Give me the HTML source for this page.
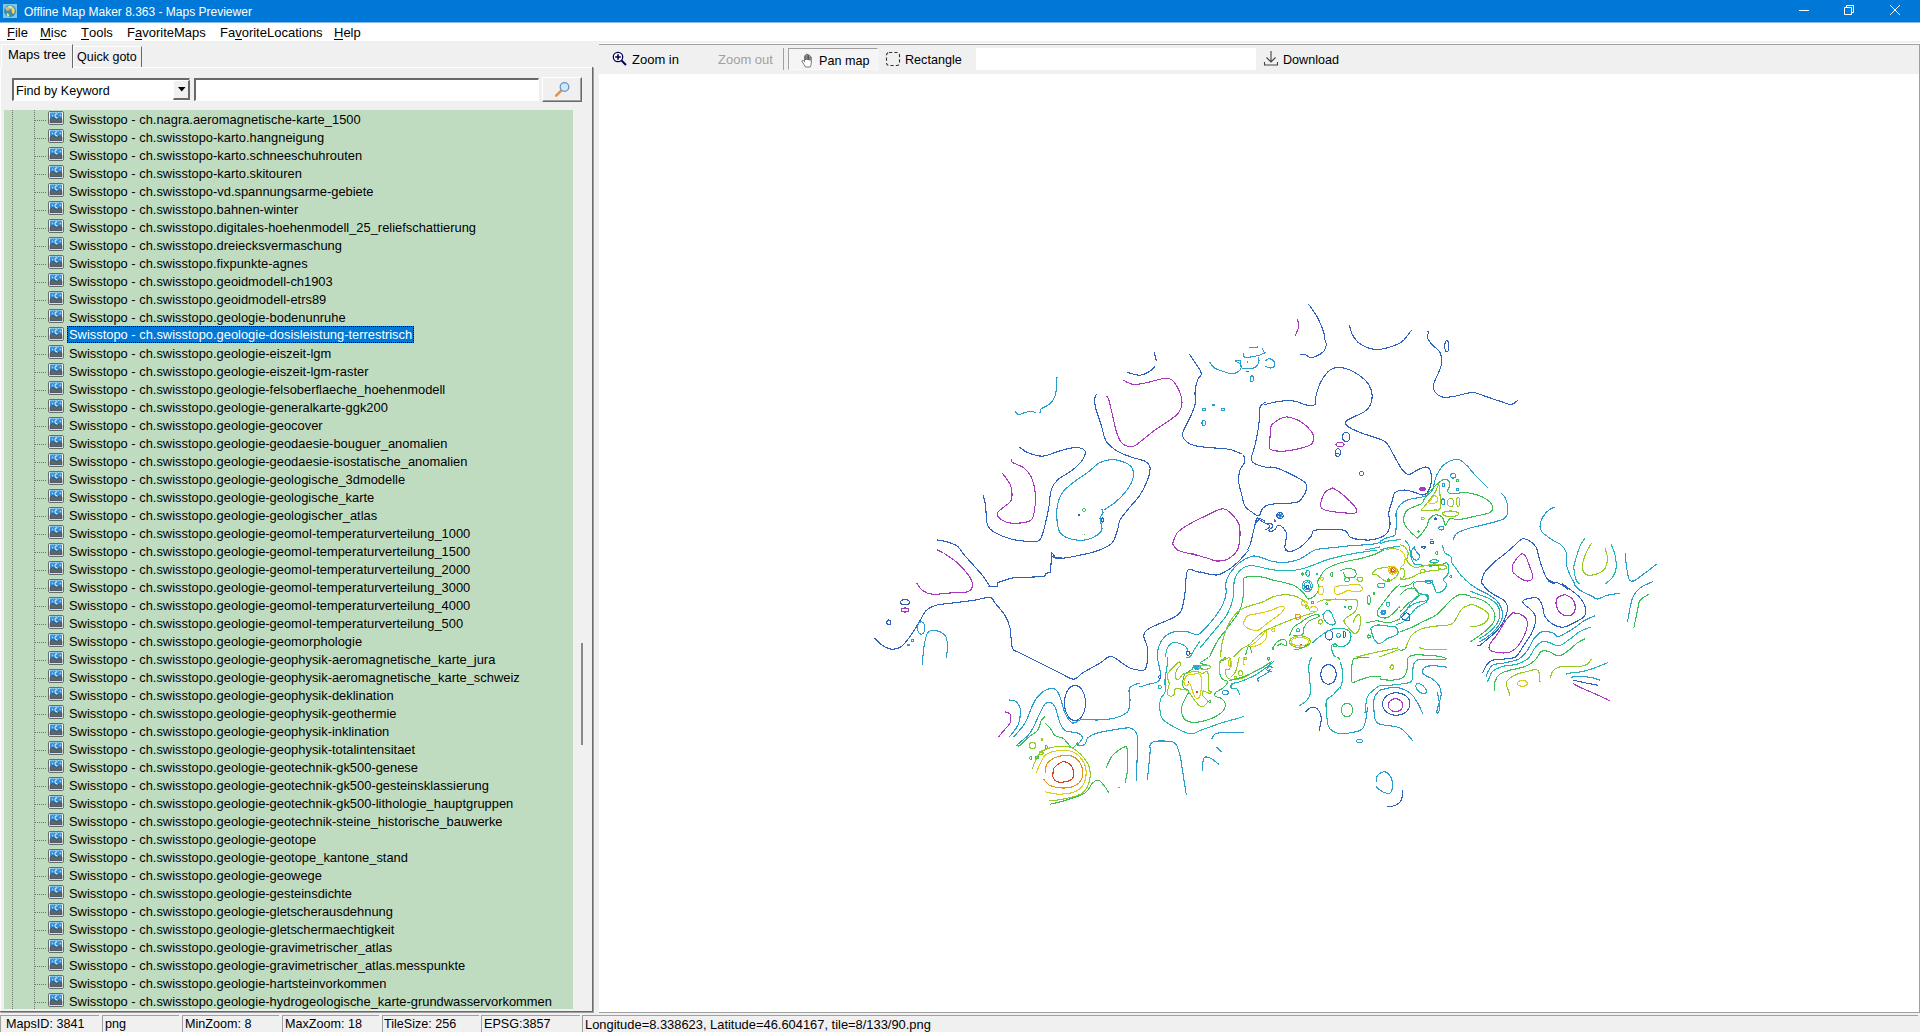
<!DOCTYPE html>
<html><head><meta charset="utf-8">
<style>
*{margin:0;padding:0;box-sizing:border-box}
html,body{width:1920px;height:1032px;overflow:hidden;background:#f0f0f0;font-family:"Liberation Sans",sans-serif;color:#000}
.a{position:absolute}
#title{left:0;top:0;width:1920px;height:22px;background:#0078d7}
#title .t{left:24px;top:4px;font-size:12px;color:#fff;line-height:16px;white-space:nowrap}
#menu{left:0;top:22px;width:1920px;height:19px;background:#fff}
#menu span{position:absolute;top:3px;font-size:13px;line-height:16px;white-space:nowrap}
#menu u{text-decoration:none;border-bottom:1px solid #000;display:inline-block;line-height:12px}
.tab{font-size:13px;line-height:16px;white-space:nowrap}
#tree{left:4px;top:110px;width:569px;height:899px;background:#c0dcc0;overflow:hidden}
.row{position:absolute;left:-4px;width:573px;height:18px}
.row .hl{position:absolute;left:35px;top:10px;width:12px;height:1px;background:repeating-linear-gradient(90deg,#6a7a6a 0 1px,transparent 1px 2px)}
.row .ic{position:absolute;left:48px;top:1px;width:16px;height:14px}
.row span{position:absolute;left:69px;top:2px;font-size:12.9px;line-height:16px;white-space:nowrap;padding:0}
.row.sel span{left:67px;top:0px;height:17px;line-height:17px;padding:0 2px;background:#0078d7;color:#fff;outline:1px dotted #000;outline-offset:-1px}
.vd{width:1px;background:repeating-linear-gradient(180deg,#6a7a6a 0 1px,transparent 1px 2px)}
.btxt{font-size:13px;line-height:16px;white-space:nowrap}
.sp{position:absolute;top:1015px;height:17px;border-top:1px solid #a0a0a0;border-left:1px solid #a0a0a0;font-size:12.6px;line-height:15px;white-space:nowrap;padding-left:5px;padding-top:1px}
</style></head><body>
<svg width="0" height="0" style="position:absolute"><defs><symbol id="ico" viewBox="0 0 16 14">
<rect x="0.5" y="0.5" width="15" height="13" rx="1.5" fill="#fff" stroke="#6a6a6a"/>
<rect x="2" y="1.2" width="12" height="10.6" fill="#3a8ad0"/>
<path d="M2 1.7h12" stroke="#c0ecff" stroke-width="0.9" stroke-dasharray="1.6 1"/>
<path d="M4.5 3.3L5.4 4.5L4.5 5.7L3.6 4.5Z" fill="#9ad8ff"/>
<path d="M9.4 2.9a1.9 1.9 0 1 0 0 3.7" stroke="#b8ecff" stroke-width="1.1" fill="none"/>
<circle cx="12.4" cy="4.4" r="0.9" fill="#9ad8ff"/>
<path d="M2 11.8V8.4Q4.4 5.2 6.6 7.3L9 9.3Q11.3 5.2 14 8.2V11.8Z" fill="#646464" stroke="#2c4252" stroke-width="0.6"/>
</symbol></defs></svg>
<div id="title" class="a">
  <svg class="a" style="left:3px;top:4px" width="14" height="14" viewBox="0 0 14 14">
    <rect x="0" y="0" width="14" height="14" fill="#7cc8ee"/>
    <circle cx="7" cy="7" r="6" fill="#3a8fb0"/>
    <path d="M2 4 Q4 1.5 6 3 L7 6 L4 7 Z" fill="#e8b060"/>
    <path d="M8 2 Q11 3 12 6 L11 10 L9 9 L8.5 6 Z" fill="#f0d070"/>
    <path d="M4 9 Q6 9 6.5 11.5 L5 13 L3.5 11 Z" fill="#e0e090"/>
    <path d="M5 2 Q7 1 9 2 L8 5 L6 4 Z" fill="#d8e8c0"/>
  </svg>
  <div class="a t">Offline Map Maker 8.363 - Maps Previewer</div>
  <div class="a" style="left:1799px;top:10px;width:10px;height:1px;background:#fff"></div>
  <svg class="a" style="left:1843px;top:4px" width="12" height="12" viewBox="0 0 12 12"><path d="M1.5 3.5h7v7h-7z M3.5 3.5v-2h7v7h-2" fill="none" stroke="#fff" stroke-width="1"/></svg>
  <svg class="a" style="left:1889px;top:4px" width="12" height="12" viewBox="0 0 12 12"><path d="M1 1L11 11M11 1L1 11" stroke="#fff" stroke-width="1"/></svg>
</div>
<div class="a" style="left:0;top:22px;width:1920px;height:1px;background:#80bceb;z-index:2"></div>
<div id="menu" class="a">
  <span style="left:7px"><u>F</u>ile</span>
  <span style="left:40px"><u>M</u>isc</span>
  <span style="left:81px"><u>T</u>ools</span>
  <span style="left:127px">F<u>a</u>voriteMaps</span>
  <span style="left:220px">Fa<u>v</u>oriteLocations</span>
  <span style="left:334px"><u>H</u>elp</span>
</div>

<!-- left panel -->
<div class="a" style="left:0;top:67px;width:594px;height:946px;border-top:1px solid #fff;border-left:1px solid #fff;border-right:1px solid #a0a0a0;border-bottom:1px solid #a0a0a0"></div>
<div class="a" style="left:592px;top:67px;width:1px;height:945px;background:#696969"></div>
<div class="a" style="left:0px;top:1011px;width:593px;height:1px;background:#696969"></div>
<!-- tabs -->
<div class="a" style="left:73px;top:46px;width:69px;height:21px;border-top:1px solid #fff;border-left:1px solid #fff;border-right:1px solid #696969;background:#f0f0f0"></div>
<div class="a" style="left:1px;top:44px;width:72px;height:24px;border-top:1px solid #fff;border-left:1px solid #fff;border-right:1px solid #696969;background:#f0f0f0"></div>
<div class="a tab" style="left:8px;top:47px">Maps tree</div>
<div class="a tab" style="left:77px;top:49px;font-size:12.5px">Quick goto</div>
<!-- combobox -->
<div class="a" style="left:12px;top:78px;width:178px;height:23px;border-top:2px solid #696969;border-left:2px solid #696969;border-bottom:1px solid #fff;border-right:1px solid #fff;background:#fff"></div>
<div class="a btxt" style="left:16px;top:83px;font-size:12.6px">Find by Keyword</div>
<div class="a" style="left:173px;top:80px;width:17px;height:20px;background:#f0f0f0;border-top:1px solid #fff;border-left:1px solid #fff;border-right:2px solid #696969;border-bottom:2px solid #696969"></div>
<svg class="a" style="left:178px;top:87px" width="8" height="5" viewBox="0 0 8 5"><path d="M0 0h7.5L3.75 4.5z" fill="#000"/></svg>
<!-- text input -->
<div class="a" style="left:194px;top:78px;width:345px;height:23px;border-top:2px solid #696969;border-left:2px solid #696969;border-bottom:1px solid #fff;border-right:1px solid #fff;background:#fff"></div>
<!-- search button -->
<div class="a" style="left:542px;top:77px;width:40px;height:25px;background:#f0f0f0;border-top:1px solid #fff;border-left:1px solid #fff;border-right:1px solid #696969;border-bottom:1px solid #696969;box-shadow:inset -1px -1px 0 #a0a0a0"></div>
<svg class="a" style="left:553px;top:80px" width="20" height="18" viewBox="0 0 20 18">
  <line x1="3.2" y1="15.6" x2="8" y2="10.8" stroke="#dc9550" stroke-width="2.6" stroke-linecap="round"/>
  <circle cx="11.5" cy="7" r="4.3" fill="#cfe8fb" stroke="#6b92c2" stroke-width="1.3"/>
</svg>
<!-- tree -->
<div id="tree" class="a">
  <div class="a vd" style="left:8px;top:0;height:899px"></div>
  <div class="a vd" style="left:30px;top:0;height:899px"></div>
<div class="row" style="top:0px"><i class="hl"></i><svg class="ic" viewBox="0 0 16 14"><use href="#ico"/></svg><span>Swisstopo - ch.nagra.aeromagnetische-karte_1500</span></div>
<div class="row" style="top:18px"><i class="hl"></i><svg class="ic" viewBox="0 0 16 14"><use href="#ico"/></svg><span>Swisstopo - ch.swisstopo-karto.hangneigung</span></div>
<div class="row" style="top:36px"><i class="hl"></i><svg class="ic" viewBox="0 0 16 14"><use href="#ico"/></svg><span>Swisstopo - ch.swisstopo-karto.schneeschuhrouten</span></div>
<div class="row" style="top:54px"><i class="hl"></i><svg class="ic" viewBox="0 0 16 14"><use href="#ico"/></svg><span>Swisstopo - ch.swisstopo-karto.skitouren</span></div>
<div class="row" style="top:72px"><i class="hl"></i><svg class="ic" viewBox="0 0 16 14"><use href="#ico"/></svg><span>Swisstopo - ch.swisstopo-vd.spannungsarme-gebiete</span></div>
<div class="row" style="top:90px"><i class="hl"></i><svg class="ic" viewBox="0 0 16 14"><use href="#ico"/></svg><span>Swisstopo - ch.swisstopo.bahnen-winter</span></div>
<div class="row" style="top:108px"><i class="hl"></i><svg class="ic" viewBox="0 0 16 14"><use href="#ico"/></svg><span>Swisstopo - ch.swisstopo.digitales-hoehenmodell_25_reliefschattierung</span></div>
<div class="row" style="top:126px"><i class="hl"></i><svg class="ic" viewBox="0 0 16 14"><use href="#ico"/></svg><span>Swisstopo - ch.swisstopo.dreiecksvermaschung</span></div>
<div class="row" style="top:144px"><i class="hl"></i><svg class="ic" viewBox="0 0 16 14"><use href="#ico"/></svg><span>Swisstopo - ch.swisstopo.fixpunkte-agnes</span></div>
<div class="row" style="top:162px"><i class="hl"></i><svg class="ic" viewBox="0 0 16 14"><use href="#ico"/></svg><span>Swisstopo - ch.swisstopo.geoidmodell-ch1903</span></div>
<div class="row" style="top:180px"><i class="hl"></i><svg class="ic" viewBox="0 0 16 14"><use href="#ico"/></svg><span>Swisstopo - ch.swisstopo.geoidmodell-etrs89</span></div>
<div class="row" style="top:198px"><i class="hl"></i><svg class="ic" viewBox="0 0 16 14"><use href="#ico"/></svg><span>Swisstopo - ch.swisstopo.geologie-bodenunruhe</span></div>
<div class="row sel" style="top:216px"><i class="hl"></i><svg class="ic" viewBox="0 0 16 14"><use href="#ico"/></svg><span>Swisstopo - ch.swisstopo.geologie-dosisleistung-terrestrisch</span></div>
<div class="row" style="top:234px"><i class="hl"></i><svg class="ic" viewBox="0 0 16 14"><use href="#ico"/></svg><span>Swisstopo - ch.swisstopo.geologie-eiszeit-lgm</span></div>
<div class="row" style="top:252px"><i class="hl"></i><svg class="ic" viewBox="0 0 16 14"><use href="#ico"/></svg><span>Swisstopo - ch.swisstopo.geologie-eiszeit-lgm-raster</span></div>
<div class="row" style="top:270px"><i class="hl"></i><svg class="ic" viewBox="0 0 16 14"><use href="#ico"/></svg><span>Swisstopo - ch.swisstopo.geologie-felsoberflaeche_hoehenmodell</span></div>
<div class="row" style="top:288px"><i class="hl"></i><svg class="ic" viewBox="0 0 16 14"><use href="#ico"/></svg><span>Swisstopo - ch.swisstopo.geologie-generalkarte-ggk200</span></div>
<div class="row" style="top:306px"><i class="hl"></i><svg class="ic" viewBox="0 0 16 14"><use href="#ico"/></svg><span>Swisstopo - ch.swisstopo.geologie-geocover</span></div>
<div class="row" style="top:324px"><i class="hl"></i><svg class="ic" viewBox="0 0 16 14"><use href="#ico"/></svg><span>Swisstopo - ch.swisstopo.geologie-geodaesie-bouguer_anomalien</span></div>
<div class="row" style="top:342px"><i class="hl"></i><svg class="ic" viewBox="0 0 16 14"><use href="#ico"/></svg><span>Swisstopo - ch.swisstopo.geologie-geodaesie-isostatische_anomalien</span></div>
<div class="row" style="top:360px"><i class="hl"></i><svg class="ic" viewBox="0 0 16 14"><use href="#ico"/></svg><span>Swisstopo - ch.swisstopo.geologie-geologische_3dmodelle</span></div>
<div class="row" style="top:378px"><i class="hl"></i><svg class="ic" viewBox="0 0 16 14"><use href="#ico"/></svg><span>Swisstopo - ch.swisstopo.geologie-geologische_karte</span></div>
<div class="row" style="top:396px"><i class="hl"></i><svg class="ic" viewBox="0 0 16 14"><use href="#ico"/></svg><span>Swisstopo - ch.swisstopo.geologie-geologischer_atlas</span></div>
<div class="row" style="top:414px"><i class="hl"></i><svg class="ic" viewBox="0 0 16 14"><use href="#ico"/></svg><span>Swisstopo - ch.swisstopo.geologie-geomol-temperaturverteilung_1000</span></div>
<div class="row" style="top:432px"><i class="hl"></i><svg class="ic" viewBox="0 0 16 14"><use href="#ico"/></svg><span>Swisstopo - ch.swisstopo.geologie-geomol-temperaturverteilung_1500</span></div>
<div class="row" style="top:450px"><i class="hl"></i><svg class="ic" viewBox="0 0 16 14"><use href="#ico"/></svg><span>Swisstopo - ch.swisstopo.geologie-geomol-temperaturverteilung_2000</span></div>
<div class="row" style="top:468px"><i class="hl"></i><svg class="ic" viewBox="0 0 16 14"><use href="#ico"/></svg><span>Swisstopo - ch.swisstopo.geologie-geomol-temperaturverteilung_3000</span></div>
<div class="row" style="top:486px"><i class="hl"></i><svg class="ic" viewBox="0 0 16 14"><use href="#ico"/></svg><span>Swisstopo - ch.swisstopo.geologie-geomol-temperaturverteilung_4000</span></div>
<div class="row" style="top:504px"><i class="hl"></i><svg class="ic" viewBox="0 0 16 14"><use href="#ico"/></svg><span>Swisstopo - ch.swisstopo.geologie-geomol-temperaturverteilung_500</span></div>
<div class="row" style="top:522px"><i class="hl"></i><svg class="ic" viewBox="0 0 16 14"><use href="#ico"/></svg><span>Swisstopo - ch.swisstopo.geologie-geomorphologie</span></div>
<div class="row" style="top:540px"><i class="hl"></i><svg class="ic" viewBox="0 0 16 14"><use href="#ico"/></svg><span>Swisstopo - ch.swisstopo.geologie-geophysik-aeromagnetische_karte_jura</span></div>
<div class="row" style="top:558px"><i class="hl"></i><svg class="ic" viewBox="0 0 16 14"><use href="#ico"/></svg><span>Swisstopo - ch.swisstopo.geologie-geophysik-aeromagnetische_karte_schweiz</span></div>
<div class="row" style="top:576px"><i class="hl"></i><svg class="ic" viewBox="0 0 16 14"><use href="#ico"/></svg><span>Swisstopo - ch.swisstopo.geologie-geophysik-deklination</span></div>
<div class="row" style="top:594px"><i class="hl"></i><svg class="ic" viewBox="0 0 16 14"><use href="#ico"/></svg><span>Swisstopo - ch.swisstopo.geologie-geophysik-geothermie</span></div>
<div class="row" style="top:612px"><i class="hl"></i><svg class="ic" viewBox="0 0 16 14"><use href="#ico"/></svg><span>Swisstopo - ch.swisstopo.geologie-geophysik-inklination</span></div>
<div class="row" style="top:630px"><i class="hl"></i><svg class="ic" viewBox="0 0 16 14"><use href="#ico"/></svg><span>Swisstopo - ch.swisstopo.geologie-geophysik-totalintensitaet</span></div>
<div class="row" style="top:648px"><i class="hl"></i><svg class="ic" viewBox="0 0 16 14"><use href="#ico"/></svg><span>Swisstopo - ch.swisstopo.geologie-geotechnik-gk500-genese</span></div>
<div class="row" style="top:666px"><i class="hl"></i><svg class="ic" viewBox="0 0 16 14"><use href="#ico"/></svg><span>Swisstopo - ch.swisstopo.geologie-geotechnik-gk500-gesteinsklassierung</span></div>
<div class="row" style="top:684px"><i class="hl"></i><svg class="ic" viewBox="0 0 16 14"><use href="#ico"/></svg><span>Swisstopo - ch.swisstopo.geologie-geotechnik-gk500-lithologie_hauptgruppen</span></div>
<div class="row" style="top:702px"><i class="hl"></i><svg class="ic" viewBox="0 0 16 14"><use href="#ico"/></svg><span>Swisstopo - ch.swisstopo.geologie-geotechnik-steine_historische_bauwerke</span></div>
<div class="row" style="top:720px"><i class="hl"></i><svg class="ic" viewBox="0 0 16 14"><use href="#ico"/></svg><span>Swisstopo - ch.swisstopo.geologie-geotope</span></div>
<div class="row" style="top:738px"><i class="hl"></i><svg class="ic" viewBox="0 0 16 14"><use href="#ico"/></svg><span>Swisstopo - ch.swisstopo.geologie-geotope_kantone_stand</span></div>
<div class="row" style="top:756px"><i class="hl"></i><svg class="ic" viewBox="0 0 16 14"><use href="#ico"/></svg><span>Swisstopo - ch.swisstopo.geologie-geowege</span></div>
<div class="row" style="top:774px"><i class="hl"></i><svg class="ic" viewBox="0 0 16 14"><use href="#ico"/></svg><span>Swisstopo - ch.swisstopo.geologie-gesteinsdichte</span></div>
<div class="row" style="top:792px"><i class="hl"></i><svg class="ic" viewBox="0 0 16 14"><use href="#ico"/></svg><span>Swisstopo - ch.swisstopo.geologie-gletscherausdehnung</span></div>
<div class="row" style="top:810px"><i class="hl"></i><svg class="ic" viewBox="0 0 16 14"><use href="#ico"/></svg><span>Swisstopo - ch.swisstopo.geologie-gletschermaechtigkeit</span></div>
<div class="row" style="top:828px"><i class="hl"></i><svg class="ic" viewBox="0 0 16 14"><use href="#ico"/></svg><span>Swisstopo - ch.swisstopo.geologie-gravimetrischer_atlas</span></div>
<div class="row" style="top:846px"><i class="hl"></i><svg class="ic" viewBox="0 0 16 14"><use href="#ico"/></svg><span>Swisstopo - ch.swisstopo.geologie-gravimetrischer_atlas.messpunkte</span></div>
<div class="row" style="top:864px"><i class="hl"></i><svg class="ic" viewBox="0 0 16 14"><use href="#ico"/></svg><span>Swisstopo - ch.swisstopo.geologie-hartsteinvorkommen</span></div>
<div class="row" style="top:882px"><i class="hl"></i><svg class="ic" viewBox="0 0 16 14"><use href="#ico"/></svg><span>Swisstopo - ch.swisstopo.geologie-hydrogeologische_karte-grundwasservorkommen</span></div>
</div>
<!-- scrollbar -->
<div class="a" style="left:581px;top:643px;width:2px;height:102px;background:#888"></div>

<!-- right panel -->
<div class="a" style="left:599px;top:43px;width:1321px;height:1px;background:#fff"></div>
<div class="a" style="left:599px;top:44px;width:1321px;height:1px;background:#a0a0a0"></div>
<div class="a" style="left:1919px;top:44px;width:1px;height:969px;background:#a0a0a0"></div>
<div class="a" style="left:599px;top:74px;width:1320px;height:938px;background:#fff"></div>
<div class="a" style="left:599px;top:1012px;width:1321px;height:1px;background:#a0a0a0"></div>
<!-- toolbar -->
<svg class="a" style="left:612px;top:51px" width="16" height="16" viewBox="0 0 16 16">
  <circle cx="6" cy="6" r="4.7" fill="#fff" stroke="#000050" stroke-width="1.3"/>
  <path d="M6 3.2v5.6M3.2 6h5.6" stroke="#000050" stroke-width="1.6"/>
  <path d="M9.5 9.5L14 14" stroke="#000050" stroke-width="2"/>
</svg>
<div class="a btxt" style="left:632px;top:52px">Zoom in</div>
<div class="a btxt" style="left:718px;top:52px;color:#a0a0a0">Zoom out</div>
<div class="a" style="left:783px;top:48px;width:1px;height:22px;background:#a0a0a0"></div>
<div class="a" style="left:788px;top:48px;width:90px;height:22px;border-top:1px solid #a0a0a0;border-left:1px solid #a0a0a0;border-right:1px solid #fafafa;border-bottom:1px solid #fafafa;background:#f5f5f5"></div>
<svg class="a" style="left:801px;top:53px" width="14" height="15" viewBox="0 0 28 30">
  <path d="M9 28 L6 23 L2 17 C1 15.5 3 14 4.5 15.2 L7 17.5 L7 6.5 C7 4.8 9.6 4.8 9.6 6.5 L9.6 14 L9.6 3.6 C9.6 1.9 12.4 1.9 12.4 3.6 L12.4 14 L12.4 4 C12.4 2.3 15.2 2.3 15.2 4 L15.2 14 L15.2 5.8 C15.2 4.1 18 4.1 18 5.8 L18 15 L18 8.6 C18 6.9 20.6 6.9 20.6 8.6 L20.6 20 C20.6 23.5 19.4 25.6 18.2 28 Z" fill="#fff" stroke="#333" stroke-width="1.3" stroke-linejoin="round"/>
</svg>
<div class="a btxt" style="left:819px;top:53px;font-size:12.6px">Pan map</div>
<svg class="a" style="left:885px;top:51px" width="16" height="16" viewBox="0 0 16 16"><rect x="1.5" y="1.5" width="13" height="13" rx="2.5" fill="none" stroke="#333" stroke-width="1.1" stroke-dasharray="3.2 2.2"/></svg>
<div class="a btxt" style="left:905px;top:52px;font-size:12.6px">Rectangle</div>
<div class="a" style="left:976px;top:48px;width:280px;height:22px;background:#fff"></div>
<svg class="a" style="left:1263px;top:50px" width="16" height="17" viewBox="0 0 16 17">
  <path d="M8 1v11M3.5 7.5L8 12l4.5-4.5M1.5 12v3h13v-3" fill="none" stroke="#444" stroke-width="1.1"/>
</svg>
<div class="a btxt" style="left:1283px;top:52px;font-size:12.6px">Download</div>

<!-- map -->
<svg class="a" style="left:0;top:0" width="1920" height="1032" viewBox="0 0 1920 1032">
<defs><mask id="mk" maskUnits="userSpaceOnUse" x="0" y="0" width="1920" height="1032"><rect x="0" y="0" width="1920" height="1032" fill="#fff"/><rect x="1200.0" y="550.0" width="200.0" height="107.0" fill="#000"/><rect x="1140.0" y="657.0" width="200.0" height="90.0" fill="#000"/><rect x="1400.0" y="540.0" width="70.0" height="107.0" fill="#000"/></mask><clipPath id="cp0"><rect x="1200.0" y="550.0" width="200.0" height="107.0"/></clipPath><clipPath id="cp1"><rect x="1140.0" y="657.0" width="200.0" height="90.0"/></clipPath><clipPath id="cp2"><rect x="1400.0" y="540.0" width="70.0" height="107.0"/></clipPath></defs>
<g fill="none" stroke-width="1.1" stroke-linejoin="round" stroke-linecap="round" shape-rendering="crispEdges">
<g mask="url(#mk)">
<path d="M1057.0,377.5 C1056.9,379.2 1056.8,384.4 1056.5,387.5 C1056.2,390.6 1056.1,393.5 1055.0,396.2 C1053.9,399.0 1052.3,401.7 1050.0,403.8 C1047.7,405.8 1042.9,407.3 1041.2,408.8 C1039.6,410.2 1040.2,411.9 1040.0,412.5" stroke="#289ed0"/>
<path d="M1035.0,412.5 C1034.4,412.3 1032.9,411.2 1031.2,411.2 C1029.6,411.2 1027.1,412.0 1025.0,412.5 C1022.9,413.0 1020.4,414.7 1018.8,414.5 C1017.1,414.3 1015.6,411.8 1015.0,411.2" stroke="#289ed0"/>
<path d="M1154.2,352.5 L1156.2,360.5" stroke="#2c62be"/>
<path d="M1155.0,366.2 C1154.2,367.1 1152.3,369.8 1150.0,371.2 C1147.7,372.7 1143.8,374.5 1141.2,375.0 C1138.8,375.5 1137.3,374.9 1135.0,374.5 C1132.7,374.1 1128.8,372.8 1127.5,372.5" stroke="#2c62be"/>
<path d="M1123.8,380.5 C1125.4,381.2 1129.8,384.2 1133.8,384.5 C1137.7,384.8 1142.7,383.5 1147.5,382.5 C1152.3,381.5 1158.5,379.2 1162.5,378.8 C1166.5,378.2 1168.5,377.6 1171.2,379.5 C1174.0,381.4 1177.0,386.2 1178.8,390.0 C1180.5,393.8 1182.0,398.8 1182.0,402.5 C1182.0,406.2 1180.8,409.6 1178.8,412.5 C1176.8,415.4 1174.0,417.1 1170.0,420.0 C1166.0,422.9 1159.6,426.7 1155.0,430.0 C1150.4,433.3 1146.0,437.3 1142.5,440.0 C1139.0,442.7 1136.2,445.2 1133.8,446.2 C1131.2,447.3 1129.6,446.9 1127.5,446.2 C1125.4,445.6 1123.1,445.0 1121.2,442.5 C1119.4,440.0 1117.7,435.8 1116.2,431.2 C1114.8,426.7 1113.8,420.2 1112.5,415.0 C1111.2,409.8 1109.7,403.1 1108.8,400.0 C1107.8,396.9 1107.1,396.9 1106.8,396.2" stroke="#a838c0"/>
<path d="M1096.2,394.5 C1096.0,395.4 1094.5,397.4 1094.5,400.0 C1094.5,402.6 1095.1,405.8 1096.2,410.0 C1097.4,414.2 1099.6,419.8 1101.2,425.0 C1102.9,430.2 1103.5,436.9 1106.2,441.2 C1109.0,445.6 1113.1,448.5 1117.5,451.2 C1121.9,454.0 1127.9,455.8 1132.5,457.5 C1137.1,459.2 1142.1,459.6 1145.0,461.2 C1147.9,462.9 1149.6,464.4 1150.0,467.5 C1150.4,470.6 1149.2,475.4 1147.5,480.0 C1145.8,484.6 1143.3,490.0 1140.0,495.0 C1136.7,500.0 1130.8,505.8 1127.5,510.0 C1124.2,514.2 1121.7,516.7 1120.0,520.0 C1118.3,523.3 1118.8,526.2 1117.5,530.0 C1116.2,533.8 1115.0,539.4 1112.5,542.5 C1110.0,545.6 1106.2,547.0 1102.5,548.8 C1098.8,550.5 1093.8,552.0 1090.0,553.0 C1086.2,554.0 1081.7,554.7 1080.0,555.0" stroke="#2c62be"/>
<path d="M1020.0,447.5 C1021.2,448.3 1023.8,451.0 1027.5,452.5 C1031.2,454.0 1037.9,456.2 1042.5,456.2 C1047.1,456.2 1050.8,453.8 1055.0,452.5 C1059.2,451.2 1063.8,449.6 1067.5,448.8 C1071.2,447.9 1074.6,447.1 1077.5,447.5 C1080.4,447.9 1084.2,449.2 1085.0,451.2 C1085.8,453.3 1084.6,456.9 1082.5,460.0 C1080.4,463.1 1076.7,466.7 1072.5,470.0 C1068.3,473.3 1061.0,476.7 1057.5,480.0 C1054.0,483.3 1052.7,485.4 1051.2,490.0 C1049.8,494.6 1049.8,501.7 1048.8,507.5 C1047.7,513.3 1046.2,520.0 1045.0,525.0 C1043.8,530.0 1042.5,534.8 1041.2,537.5 C1040.0,540.2 1040.2,540.6 1037.5,541.2 C1034.8,541.9 1029.6,541.7 1025.0,541.2 C1020.4,540.8 1015.0,540.2 1010.0,538.8 C1005.0,537.3 998.8,534.8 995.0,532.5 C991.2,530.2 989.1,529.6 987.5,525.0 C985.9,520.4 986.2,510.0 985.5,505.0 C984.8,500.0 983.4,496.7 983.0,495.0" stroke="#2c62be"/>
<path d="M1011.2,459.5 C1011.5,460.0 1010.2,461.0 1012.5,462.5 C1014.8,464.0 1021.7,465.8 1025.0,468.8 C1028.3,471.7 1030.8,475.6 1032.5,480.0 C1034.2,484.4 1035.2,490.0 1035.5,495.0 C1035.8,500.0 1035.2,505.8 1034.5,510.0 C1033.8,514.2 1033.7,517.8 1031.2,520.0 C1028.8,522.2 1024.0,522.6 1020.0,523.0 C1016.0,523.4 1011.0,523.4 1007.5,522.5 C1004.0,521.6 1000.4,519.2 998.8,517.5 C997.1,515.8 996.5,514.4 997.5,512.5 C998.5,510.6 1002.7,508.3 1005.0,506.2 C1007.3,504.2 1010.2,503.1 1011.2,500.0 C1012.3,496.9 1011.9,490.8 1011.2,487.5 C1010.6,484.2 1009.0,482.4 1007.5,480.0 C1006.0,477.6 1002.9,474.2 1002.0,473.0" stroke="#a838c0"/>
<path d="M1102.0,509.5 C1102.2,510.0 1103.3,511.0 1103.0,512.5 C1102.7,514.0 1100.2,516.0 1100.0,518.8 C1099.8,521.5 1102.4,526.0 1102.0,528.8 C1101.6,531.5 1100.3,533.1 1097.5,535.0 C1094.7,536.9 1089.6,539.4 1085.0,540.0 C1080.4,540.6 1074.2,540.0 1070.0,538.8 C1065.8,537.5 1062.2,535.6 1060.0,532.5 C1057.8,529.4 1057.4,524.6 1057.0,520.0 C1056.6,515.4 1056.6,509.6 1057.5,505.0 C1058.4,500.4 1059.6,496.5 1062.5,492.5 C1065.4,488.5 1070.8,484.6 1075.0,481.2 C1079.2,477.9 1083.3,475.6 1087.5,472.5 C1091.7,469.4 1095.8,464.7 1100.0,462.5 C1104.2,460.3 1108.3,459.5 1112.5,459.5 C1116.7,459.5 1121.7,461.0 1125.0,462.5 C1128.3,464.0 1131.2,465.8 1132.5,468.8 C1133.8,471.7 1133.8,476.0 1132.5,480.0 C1131.2,484.0 1127.9,488.8 1125.0,492.5 C1122.1,496.2 1118.5,499.6 1115.0,502.5 C1111.5,505.4 1105.6,508.8 1103.8,510.0" stroke="#289ed0"/>
<ellipse cx="1084.0" cy="510.0" rx="2.0" ry="1.2" stroke="#3abe56"/>
<ellipse cx="1079.0" cy="514.8" rx="0.5" ry="0.5" stroke="#2c62be"/>
<ellipse cx="1102.5" cy="520.0" rx="1.0" ry="2.0" stroke="#2c62be"/>
<ellipse cx="1084.5" cy="533.8" rx="0.2" ry="0.2" stroke="#3abe56"/>
<path d="M1189.5,354.5 C1190.4,355.8 1193.2,359.9 1195.0,362.5 C1196.8,365.1 1199.0,368.0 1200.0,370.0 C1201.0,372.0 1201.7,372.8 1201.2,374.5 C1200.8,376.2 1198.5,377.0 1197.5,380.0 C1196.5,383.0 1195.3,388.8 1195.0,392.5 C1194.7,396.2 1196.1,398.8 1195.5,402.5 C1194.9,406.2 1193.0,410.8 1191.2,415.0 C1189.5,419.2 1186.5,424.2 1185.0,427.5 C1183.5,430.8 1182.1,432.5 1182.5,435.0 C1182.9,437.5 1185.0,440.6 1187.5,442.5 C1190.0,444.4 1192.9,445.3 1197.5,446.2 C1202.1,447.2 1209.6,447.5 1215.0,448.0 C1220.4,448.5 1225.6,448.5 1230.0,449.5 C1234.4,450.5 1239.4,453.0 1241.2,453.8" stroke="#2c62be"/>
<path d="M1210.0,362.5 C1210.6,363.3 1211.7,366.0 1213.8,367.5 C1215.8,369.0 1219.4,370.2 1222.5,371.2 C1225.6,372.3 1229.8,373.8 1232.5,373.8 C1235.2,373.8 1237.3,372.3 1238.8,371.2 C1240.2,370.2 1241.0,368.8 1241.2,367.5 C1241.5,366.2 1241.0,364.8 1240.0,363.8 C1239.0,362.7 1235.8,361.7 1235.0,361.2" stroke="#289ed0"/>
<ellipse cx="1204.0" cy="409.5" rx="1.5" ry="1.5" stroke="#289ed0"/>
<ellipse cx="1213.2" cy="405.0" rx="1.0" ry="1.0" stroke="#289ed0"/>
<ellipse cx="1223.0" cy="409.5" rx="1.5" ry="1.0" stroke="#289ed0"/>
<ellipse cx="1203.8" cy="423.0" rx="1.8" ry="2.5" stroke="#289ed0"/>
<ellipse cx="1252.0" cy="378.8" rx="1.5" ry="3.0" stroke="#289ed0"/>
<path d="M1265.0,402.5 C1264.2,403.3 1261.0,403.8 1260.0,407.5 C1259.0,411.2 1259.6,418.8 1258.8,425.0 C1257.9,431.2 1256.2,439.6 1255.0,445.0 C1253.8,450.4 1251.9,455.4 1251.2,457.5" stroke="#2c62be"/>
<path d="M937.5,540.0 C939.2,540.3 944.2,541.0 947.5,542.0 C950.8,543.0 955.0,544.4 957.5,546.2 C960.0,548.1 961.7,551.9 962.5,553.0" stroke="#2c62be"/>
<path d="M937.5,550.0 L942.5,552.5" stroke="#a838c0"/>
<path d="M1256.2,522.5 C1256.9,521.9 1258.5,519.0 1260.0,518.8 C1261.5,518.5 1264.2,520.8 1265.0,521.2" stroke="#2c62be"/>
<path d="M1250.0,347.5 L1257.5,347.0" stroke="#289ed0"/>
<path d="M1243.8,353.8 C1244.0,354.4 1243.1,357.1 1245.0,357.5 C1246.9,357.9 1252.5,356.7 1255.0,356.2 C1257.5,355.8 1258.3,355.6 1260.0,355.0 C1261.7,354.4 1264.2,352.9 1265.0,352.5" stroke="#289ed0"/>
<path d="M1235.0,361.2 C1235.8,361.1 1239.0,359.5 1240.0,360.5 C1241.0,361.5 1240.0,366.1 1241.2,367.5 C1242.5,368.9 1245.2,368.8 1247.5,368.8 C1249.8,368.8 1253.1,368.5 1255.0,367.5 C1256.9,366.5 1258.1,364.2 1258.8,362.5 C1259.4,360.8 1258.8,358.3 1258.8,357.5" stroke="#289ed0"/>
<ellipse cx="1247.5" cy="362.0" rx="0.5" ry="0.5" stroke="#3abe56"/>
<path d="M1246.2,371.2 L1248.8,371.2" stroke="#2c62be"/>
<path d="M1262.5,348.8 L1265.0,353.8" stroke="#289ed0"/>
<path d="M1308.8,304.5 C1310.2,306.7 1315.0,312.8 1317.5,317.5 C1320.0,322.2 1322.5,328.8 1323.8,332.5 C1325.0,336.2 1324.6,337.9 1325.0,340.0 C1325.4,342.1 1326.5,343.1 1326.2,345.0 C1326.0,346.9 1325.4,349.4 1323.8,351.2 C1322.1,353.1 1318.5,355.2 1316.2,356.2 C1314.0,357.3 1311.9,357.8 1310.0,357.5 C1308.1,357.2 1306.7,354.9 1305.0,354.5 C1303.3,354.1 1300.8,354.9 1300.0,355.0" stroke="#2c62be"/>
<path d="M1297.5,320.0 C1297.7,321.0 1299.1,323.7 1298.8,326.2 C1298.4,328.8 1296.0,334.0 1295.5,335.5" stroke="#a838c0"/>
<path d="M1349.5,325.5 C1350.0,327.1 1350.8,332.0 1352.5,335.0 C1354.2,338.0 1356.2,341.3 1360.0,343.8 C1363.8,346.2 1370.0,349.0 1375.0,349.5 C1380.0,350.0 1385.4,348.4 1390.0,347.0 C1394.6,345.6 1399.0,344.0 1402.5,341.2 C1406.0,338.5 1409.8,332.3 1411.2,330.5" stroke="#2c62be"/>
<path d="M1427.0,330.8 C1427.3,331.1 1428.8,332.1 1428.8,333.0 C1428.8,333.9 1426.6,334.5 1427.0,336.2 C1427.4,338.0 1429.1,341.0 1431.2,343.8 C1433.4,346.5 1438.3,349.0 1440.0,352.5 C1441.7,356.0 1441.7,361.2 1441.2,365.0 C1440.8,368.8 1438.8,371.9 1437.5,375.0 C1436.2,378.1 1434.2,381.0 1433.8,383.8 C1433.2,386.5 1433.0,389.0 1434.5,391.2 C1436.0,393.5 1439.1,396.2 1442.5,397.0 C1445.9,397.8 1450.0,397.0 1455.0,396.2 C1460.0,395.5 1467.5,392.5 1472.5,392.5 C1477.5,392.5 1480.4,394.8 1485.0,396.2 C1489.6,397.7 1495.6,399.9 1500.0,401.2 C1504.4,402.6 1508.3,404.6 1511.2,404.5 C1514.2,404.4 1516.5,401.2 1517.5,400.5" stroke="#2c62be"/>
<ellipse cx="1446.8" cy="346.2" rx="2.0" ry="5.5" stroke="#2c62be"/>
<path d="M1265.0,361.2 C1265.6,360.8 1267.3,358.8 1268.8,358.8 C1270.2,358.8 1272.8,360.0 1273.8,361.2 C1274.7,362.5 1275.1,365.1 1274.5,366.2 C1273.9,367.4 1271.6,368.0 1270.0,368.0 C1268.4,368.0 1265.8,366.5 1265.0,366.2" stroke="#289ed0"/>
<path d="M1265.0,404.5 C1267.5,404.0 1275.0,401.8 1280.0,401.2 C1285.0,400.7 1290.6,400.6 1295.0,401.2 C1299.4,401.9 1302.9,404.5 1306.2,405.0 C1309.6,405.5 1313.3,406.2 1315.0,404.5 C1316.7,402.8 1315.2,398.9 1316.2,395.0 C1317.3,391.1 1319.0,385.4 1321.2,381.2 C1323.5,377.1 1326.9,372.3 1330.0,370.0 C1333.1,367.7 1336.2,367.3 1340.0,367.5 C1343.8,367.7 1348.3,369.2 1352.5,371.2 C1356.7,373.3 1361.9,376.9 1365.0,380.0 C1368.1,383.1 1370.2,386.2 1371.2,390.0 C1372.3,393.8 1372.3,399.0 1371.2,402.5 C1370.2,406.0 1368.1,408.8 1365.0,411.2 C1361.9,413.8 1355.6,415.8 1352.5,417.5 C1349.4,419.2 1347.1,419.8 1346.2,421.2 C1345.4,422.7 1345.2,424.4 1347.5,426.2 C1349.8,428.1 1355.4,430.6 1360.0,432.5 C1364.6,434.4 1370.6,435.8 1375.0,437.5 C1379.4,439.2 1382.9,439.2 1386.2,442.5 C1389.6,445.8 1392.3,452.9 1395.0,457.5 C1397.7,462.1 1400.2,467.2 1402.5,470.0 C1404.8,472.8 1406.2,474.5 1408.8,474.5 C1411.2,474.5 1414.8,471.2 1417.5,470.0 C1420.2,468.8 1422.9,467.0 1425.0,467.0 C1427.1,467.0 1429.0,467.4 1430.0,470.0 C1431.0,472.6 1431.7,478.8 1431.2,482.5 C1430.8,486.2 1429.0,490.4 1427.5,492.5 C1426.0,494.6 1424.6,495.0 1422.5,495.0 C1420.4,495.0 1417.9,493.3 1415.0,492.5 C1412.1,491.7 1408.3,490.0 1405.0,490.0 C1401.7,490.0 1397.1,490.8 1395.0,492.5 C1392.9,494.2 1393.5,496.7 1392.5,500.0 C1391.5,503.3 1389.2,508.3 1388.8,512.5 C1388.3,516.7 1390.6,521.2 1390.0,525.0 C1389.4,528.8 1388.3,532.5 1385.0,535.0 C1381.7,537.5 1375.0,539.4 1370.0,540.0 C1365.0,540.6 1357.5,539.0 1355.0,538.8" stroke="#2c62be"/>
<path d="M1271.2,425.0 C1272.7,424.0 1277.3,420.1 1280.0,418.8 C1282.7,417.4 1284.2,416.6 1287.5,417.0 C1290.8,417.4 1296.0,418.9 1300.0,421.2 C1304.0,423.6 1309.0,428.2 1311.2,431.2 C1313.5,434.3 1314.0,437.2 1313.8,439.5 C1313.5,441.8 1313.1,443.3 1310.0,445.0 C1306.9,446.7 1300.0,448.5 1295.0,449.5 C1290.0,450.5 1284.2,451.4 1280.0,451.2 C1275.8,451.1 1271.7,451.0 1270.0,448.8 C1268.3,446.5 1269.8,441.5 1270.0,437.5 C1270.2,433.5 1271.0,427.1 1271.2,425.0" stroke="#a838c0"/>
<ellipse cx="1346.2" cy="437.0" rx="3.8" ry="4.5" stroke="#2c62be"/>
<ellipse cx="1338.0" cy="452.5" rx="2.5" ry="3.8" stroke="#2c62be"/>
<ellipse cx="1340.0" cy="444.5" rx="4.0" ry="2.0" stroke="#a838c0"/>
<ellipse cx="1361.5" cy="473.5" rx="2.0" ry="2.0" stroke="#a838c0"/>
<ellipse cx="1422.5" cy="488.8" rx="3.0" ry="1.2" stroke="#a838c0"/>
<path d="M1332.5,488.0 C1333.8,488.8 1337.1,490.3 1340.0,492.5 C1342.9,494.7 1347.3,498.5 1350.0,501.2 C1352.7,504.0 1355.4,506.8 1356.2,508.8 C1357.1,510.7 1357.7,512.4 1355.0,513.0 C1352.3,513.6 1345.0,513.0 1340.0,512.5 C1335.0,512.0 1328.2,511.2 1325.0,510.0 C1321.8,508.8 1320.5,507.9 1320.5,505.0 C1320.5,502.1 1323.0,495.3 1325.0,492.5 C1327.0,489.7 1331.2,488.8 1332.5,488.0" stroke="#a838c0"/>
<ellipse cx="1279.5" cy="515.0" rx="2.5" ry="2.5" stroke="#289ed0"/>
<ellipse cx="1279.5" cy="515.0" rx="1.0" ry="1.0" stroke="#2c62be"/>
<ellipse cx="1275.0" cy="521.2" rx="0.5" ry="0.5" stroke="#a838c0"/>
<path d="M1267.5,523.8 C1267.9,524.2 1270.0,525.4 1270.0,526.2 C1270.0,527.1 1268.3,528.1 1267.5,528.8 C1266.7,529.4 1265.4,529.8 1265.0,530.0" stroke="#2c62be"/>
<path d="M943.8,553.0 C946.0,554.7 953.3,559.2 957.5,563.0 C961.7,566.8 966.2,571.8 968.8,575.5 C971.2,579.2 972.7,582.8 972.5,585.5 C972.3,588.2 971.2,590.5 967.5,591.8 C963.8,593.0 955.8,592.6 950.0,593.0 C944.2,593.4 937.1,594.7 932.5,594.2 C927.9,593.8 925.1,592.3 922.5,590.5 C919.9,588.7 917.9,584.7 917.0,583.5" stroke="#a838c0"/>
<path d="M962.5,553.0 C964.2,554.9 969.2,560.5 972.5,564.2 C975.8,568.0 979.6,571.8 982.5,575.5 C985.4,579.2 988.8,584.9 990.0,586.8" stroke="#2c62be"/>
<path d="M1052.5,556.8 C1054.6,557.0 1058.8,558.6 1065.0,558.0 C1071.2,557.4 1085.8,553.8 1090.0,553.0" stroke="#2c62be"/>
<path d="M875.0,638.5 C876.2,639.7 879.6,643.7 882.5,645.5 C885.4,647.3 889.2,649.2 892.5,649.2 C895.8,649.2 899.2,648.2 902.5,645.5 C905.8,642.8 909.6,637.2 912.5,633.0 C915.4,628.8 917.7,624.2 920.0,620.5 C922.3,616.8 923.8,613.0 926.2,610.5 C928.8,608.0 930.6,606.8 935.0,605.5 C939.4,604.2 946.2,603.8 952.5,603.0 C958.8,602.2 966.2,601.4 972.5,600.5 C978.8,599.6 986.2,597.1 990.0,597.5 C993.8,597.9 992.5,600.0 995.0,603.0 C997.5,606.0 1002.5,611.3 1005.0,615.5 C1007.5,619.7 1008.8,622.6 1010.0,628.0 C1011.2,633.4 1010.8,643.8 1012.5,648.0 C1014.2,652.2 1015.4,650.5 1020.0,653.0 C1024.6,655.5 1033.3,659.7 1040.0,663.0 C1046.7,666.3 1054.4,670.3 1060.0,673.0 C1065.6,675.7 1070.0,679.2 1073.8,679.2 C1077.5,679.2 1078.1,675.7 1082.5,673.0 C1086.9,670.3 1095.6,665.7 1100.0,663.0 C1104.4,660.3 1106.2,657.6 1108.8,656.8 C1111.2,655.9 1111.5,656.1 1115.0,658.0 C1118.5,659.9 1125.0,666.0 1130.0,668.0 C1135.0,670.0 1142.1,670.8 1145.0,670.0 C1147.9,669.2 1147.1,666.7 1147.5,663.0 C1147.9,659.3 1148.1,652.6 1147.5,648.0 C1146.9,643.4 1143.3,638.8 1143.8,635.5 C1144.2,632.2 1145.2,630.9 1150.0,628.0 C1154.8,625.1 1167.3,620.9 1172.5,618.0 C1177.7,615.1 1179.2,614.7 1181.2,610.5 C1183.3,606.3 1184.0,599.7 1185.0,593.0 C1186.0,586.3 1185.4,574.0 1187.5,570.5 C1189.6,567.0 1192.5,570.9 1197.5,571.8 C1202.5,572.6 1211.7,576.1 1217.5,575.5 C1223.3,574.9 1227.9,571.8 1232.5,568.0 C1237.1,564.2 1242.9,555.5 1245.0,553.0" stroke="#2c62be"/>
<path d="M1190.0,553.0 C1192.1,553.6 1197.9,555.4 1202.5,556.8 C1207.1,558.1 1212.9,560.6 1217.5,561.0 C1222.1,561.4 1226.9,560.6 1230.0,559.2 C1233.1,557.9 1235.2,554.0 1236.2,553.0" stroke="#a838c0"/>
<ellipse cx="905.0" cy="602.2" rx="4.5" ry="2.5" stroke="#2c62be"/>
<ellipse cx="905.0" cy="610.0" rx="3.8" ry="2.0" stroke="#a838c0"/>
<ellipse cx="888.8" cy="622.5" rx="2.0" ry="2.5" stroke="#2c62be"/>
<ellipse cx="921.2" cy="628.0" rx="3.8" ry="6.2" stroke="#289ed0"/>
<ellipse cx="912.5" cy="640.5" rx="1.2" ry="1.2" stroke="#289ed0"/>
<ellipse cx="908.8" cy="645.0" rx="1.0" ry="1.0" stroke="#289ed0"/>
<path d="M922.5,664.2 C922.7,661.5 922.9,653.2 923.8,648.0 C924.6,642.8 925.6,635.9 927.5,633.0 C929.4,630.1 932.1,630.1 935.0,630.5 C937.9,630.9 942.9,633.0 945.0,635.5 C947.1,638.0 947.3,641.8 947.5,645.5 C947.7,649.2 946.5,655.9 946.2,658.0" stroke="#289ed0"/>
<ellipse cx="1075.0" cy="703.0" rx="10.5" ry="17.5" stroke="#2c62be"/>
<path d="M1008.8,700.0 C1009.8,700.2 1013.1,699.7 1015.0,701.0 C1016.9,702.3 1019.4,704.3 1020.0,708.0 C1020.6,711.7 1020.0,718.8 1018.8,723.0 C1017.5,727.2 1014.0,730.7 1012.5,733.0 C1011.0,735.3 1010.0,736.1 1009.5,736.8" stroke="#289ed0"/>
<path d="M1005.0,711.8 C1005.8,712.2 1009.2,712.4 1010.0,714.2 C1010.8,716.1 1011.0,720.3 1010.0,723.0 C1009.0,725.7 1005.6,728.2 1003.8,730.5 C1001.9,732.8 999.6,735.7 998.8,736.8" stroke="#a838c0"/>
<path d="M1013.8,736.8 C1015.6,734.5 1021.5,729.0 1025.0,723.0 C1028.5,717.0 1031.7,705.9 1035.0,700.5 C1038.3,695.1 1041.7,692.4 1045.0,690.5 C1048.3,688.6 1052.5,688.2 1055.0,689.2 C1057.5,690.3 1058.3,692.8 1060.0,696.8 C1061.7,700.7 1062.9,708.6 1065.0,713.0 C1067.1,717.4 1069.6,722.0 1072.5,723.0 C1075.4,724.0 1078.3,719.8 1082.5,719.2 C1086.7,718.8 1092.1,720.2 1097.5,720.0 C1102.9,719.8 1110.0,719.4 1115.0,718.0 C1120.0,716.6 1125.0,714.7 1127.5,711.8 C1130.0,708.8 1129.7,704.5 1130.0,700.5 C1130.3,696.5 1127.8,690.9 1129.5,688.0 C1131.2,685.1 1136.2,684.0 1140.0,683.0 C1143.8,682.0 1149.6,682.6 1152.5,681.8 C1155.4,680.9 1156.3,679.9 1157.5,678.0 C1158.7,676.1 1159.5,673.0 1159.5,670.5 C1159.5,668.0 1157.8,664.2 1157.5,663.0" stroke="#289ed0"/>
<path d="M1016.2,745.5 C1018.5,743.4 1026.0,738.4 1030.0,733.0 C1034.0,727.6 1037.5,717.8 1040.0,713.0 C1042.5,708.2 1043.3,706.0 1045.0,704.2 C1046.7,702.5 1048.3,702.1 1050.0,702.5 C1051.7,702.9 1053.3,703.3 1055.0,706.8 C1056.7,710.2 1058.3,719.0 1060.0,723.0 C1061.7,727.0 1062.1,728.8 1065.0,730.5 C1067.9,732.2 1074.6,731.8 1077.5,733.0 C1080.4,734.2 1082.5,735.9 1082.5,738.0 C1082.5,740.1 1077.1,744.5 1077.5,745.5 C1077.9,746.5 1083.3,745.5 1085.0,744.2 C1086.7,743.0 1085.4,739.9 1087.5,738.0 C1089.6,736.1 1092.5,734.5 1097.5,733.0 C1102.5,731.5 1112.1,730.1 1117.5,729.2 C1122.9,728.4 1126.9,727.4 1130.0,728.0 C1133.1,728.6 1135.0,730.5 1136.2,733.0 C1137.5,735.5 1137.5,735.1 1137.5,743.0 C1137.5,750.9 1136.5,774.2 1136.2,780.5" stroke="#289ed0"/>
<path d="M1147.5,779.2 C1147.9,774.9 1149.4,759.2 1150.0,753.0 C1150.6,746.8 1148.8,743.8 1151.2,741.8 C1153.8,739.8 1161.0,740.8 1165.0,741.0 C1169.0,741.2 1172.5,740.6 1175.0,743.0 C1177.5,745.4 1178.8,750.9 1180.0,755.5 C1181.2,760.1 1181.5,764.0 1182.5,770.5 C1183.5,777.0 1185.6,790.3 1186.2,794.2" stroke="#289ed0"/>
<path d="M1045.0,716.8 C1044.4,717.4 1042.5,718.2 1041.2,720.5 C1040.0,722.8 1039.8,727.6 1037.5,730.5 C1035.2,733.4 1030.4,735.5 1027.5,738.0 C1024.6,740.5 1021.9,744.2 1020.0,745.5 C1018.1,746.8 1016.9,745.5 1016.2,745.5" stroke="#3abe56"/>
<path d="M1045.0,723.0 C1045.8,723.8 1048.3,725.9 1050.0,728.0 C1051.7,730.1 1052.9,733.8 1055.0,735.5 C1057.1,737.2 1060.4,736.8 1062.5,738.0 C1064.6,739.2 1065.8,741.3 1067.5,743.0 C1069.2,744.7 1070.8,748.0 1072.5,748.0 C1074.2,748.0 1076.7,743.8 1077.5,743.0" stroke="#3abe56"/>
<path d="M1106.2,768.0 C1107.3,765.9 1109.4,759.0 1112.5,755.5 C1115.6,752.0 1122.5,747.2 1125.0,746.8 C1127.5,746.3 1127.1,749.0 1127.5,753.0 C1127.9,757.0 1127.9,765.5 1127.5,770.5 C1127.1,775.5 1125.4,780.9 1125.0,783.0" stroke="#3abe56"/>
<ellipse cx="1118.8" cy="787.5" rx="0.5" ry="0.5" stroke="#3abe56"/>
<ellipse cx="1032.5" cy="745.5" rx="3.0" ry="3.0" stroke="#94cc20"/>
<ellipse cx="1041.2" cy="753.0" rx="2.0" ry="2.0" stroke="#94cc20"/>
<ellipse cx="1037.0" cy="757.5" rx="1.5" ry="1.5" stroke="#3abe56"/>
<ellipse cx="1030.8" cy="758.0" rx="1.2" ry="1.2" stroke="#3abe56"/>
<ellipse cx="1046.2" cy="746.8" rx="1.0" ry="1.5" stroke="#3abe56"/>
<ellipse cx="1042.0" cy="739.2" rx="1.0" ry="1.0" stroke="#94cc20"/>
<path d="M1053.8,768.0 C1055.2,767.0 1059.6,762.2 1062.5,761.8 C1065.4,761.3 1069.4,763.2 1071.2,765.5 C1073.1,767.8 1074.2,772.9 1073.8,775.5 C1073.3,778.1 1071.5,780.0 1068.8,781.0 C1066.0,782.0 1060.1,782.5 1057.5,781.8 C1054.9,781.0 1053.6,779.0 1053.0,776.8 C1052.4,774.5 1053.6,769.5 1053.8,768.0" stroke="#d44422"/>
<path d="M1045.0,773.0 C1045.4,771.3 1045.4,765.7 1047.5,763.0 C1049.6,760.3 1053.8,758.0 1057.5,756.8 C1061.2,755.5 1066.2,754.5 1070.0,755.5 C1073.8,756.5 1077.9,759.7 1080.0,763.0 C1082.1,766.3 1082.9,772.0 1082.5,775.5 C1082.1,779.0 1080.4,782.2 1077.5,784.2 C1074.6,786.3 1069.6,787.8 1065.0,788.0 C1060.4,788.2 1053.5,787.0 1050.0,785.5 C1046.5,784.0 1044.8,780.3 1043.8,779.2" stroke="#e49218"/>
<path d="M1036.2,773.0 C1037.7,770.1 1041.0,759.2 1045.0,755.5 C1049.0,751.8 1055.0,750.9 1060.0,750.5 C1065.0,750.1 1070.8,750.5 1075.0,753.0 C1079.2,755.5 1083.3,760.9 1085.0,765.5 C1086.7,770.1 1086.2,776.3 1085.0,780.5 C1083.8,784.7 1081.7,788.2 1077.5,790.5 C1073.3,792.8 1065.4,794.0 1060.0,794.2 C1054.6,794.5 1047.5,792.2 1045.0,791.8" stroke="#dccc1c"/>
<path d="M1032.5,768.0 C1033.8,765.5 1036.2,756.5 1040.0,753.0 C1043.8,749.5 1049.6,747.6 1055.0,746.8 C1060.4,745.9 1067.1,745.3 1072.5,748.0 C1077.9,750.7 1084.6,758.0 1087.5,763.0 C1090.4,768.0 1090.8,773.0 1090.0,778.0 C1089.2,783.0 1087.1,789.5 1082.5,793.0 C1077.9,796.5 1067.9,798.0 1062.5,799.2 C1057.1,800.5 1052.1,800.3 1050.0,800.5" stroke="#94cc20"/>
<path d="M1050.0,804.2 C1052.5,803.6 1059.2,802.4 1065.0,800.5 C1070.8,798.6 1080.4,795.9 1085.0,793.0 C1089.6,790.1 1090.2,785.1 1092.5,783.0 C1094.8,780.9 1096.7,779.9 1098.8,780.5 C1100.8,781.1 1103.3,784.7 1105.0,786.8 C1106.7,788.8 1108.1,792.0 1108.8,793.0" stroke="#3abe56"/>
<path d="M1211.2,738.0 C1212.3,737.2 1212.3,734.0 1217.5,733.0 C1222.7,732.0 1238.3,732.0 1242.5,731.8" stroke="#289ed0"/>
<path d="M1211.2,738.0 C1211.9,739.2 1213.3,743.2 1215.0,745.5 C1216.7,747.8 1220.2,750.7 1221.2,751.8" stroke="#289ed0"/>
<path d="M1202.5,770.5 C1202.7,768.4 1202.5,760.1 1203.8,758.0 C1205.0,755.9 1207.5,757.0 1210.0,758.0 C1212.5,759.0 1217.3,763.2 1218.8,764.2" stroke="#289ed0"/>
<path d="M1158.8,710.5 C1159.2,712.6 1159.0,720.1 1161.2,723.0 C1163.5,725.9 1166.9,726.3 1172.5,728.0 C1178.1,729.7 1187.9,732.5 1195.0,733.0 C1202.1,733.5 1209.2,732.7 1215.0,731.0 C1220.8,729.3 1225.0,725.4 1230.0,723.0 C1235.0,720.6 1242.5,717.8 1245.0,716.8" stroke="#289ed0"/>
<path d="M1182.5,703.0 C1182.9,704.9 1182.5,711.3 1185.0,714.2 C1187.5,717.2 1192.5,720.1 1197.5,720.5 C1202.5,720.9 1210.4,719.2 1215.0,716.8 C1219.6,714.2 1223.8,708.6 1225.0,705.5 C1226.2,702.4 1224.2,700.1 1222.5,698.0 C1220.8,695.9 1216.2,693.8 1215.0,693.0" stroke="#3abe56"/>
<path d="M1306.2,710.5 C1307.3,710.1 1310.4,707.6 1312.5,708.0 C1314.6,708.4 1317.3,710.9 1318.8,713.0 C1320.2,715.1 1321.2,717.8 1321.2,720.5 C1321.2,723.2 1319.2,727.8 1318.8,729.2" stroke="#2c62be"/>
<path d="M1326.2,703.0 C1326.5,706.3 1325.2,718.0 1327.5,723.0 C1329.8,728.0 1334.6,731.8 1340.0,733.0 C1345.4,734.2 1355.8,732.2 1360.0,730.5 C1364.2,728.8 1363.8,726.8 1365.0,723.0 C1366.2,719.2 1367.1,710.5 1367.5,708.0" stroke="#289ed0"/>
<path d="M1373.8,708.0 C1374.4,710.5 1373.1,719.7 1377.5,723.0 C1381.9,726.3 1394.2,725.1 1400.0,728.0 C1405.8,730.9 1410.4,738.4 1412.5,740.5" stroke="#289ed0"/>
<path d="M1437.5,693.0 C1437.9,695.5 1440.0,704.7 1440.0,708.0 C1440.0,711.3 1437.9,712.2 1437.5,713.0" stroke="#289ed0"/>
<ellipse cx="1359.5" cy="741.0" rx="3.0" ry="1.5" stroke="#289ed0"/>
<path d="M1376.2,781.8 C1376.5,780.7 1376.0,777.2 1377.5,775.5 C1379.0,773.8 1382.7,771.3 1385.0,771.8 C1387.3,772.2 1390.0,775.5 1391.2,778.0 C1392.5,780.5 1392.7,784.2 1392.5,786.8 C1392.3,789.2 1391.7,792.2 1390.0,793.0 C1388.3,793.8 1384.8,792.8 1382.5,791.8 C1380.2,790.7 1377.3,787.6 1376.2,786.8" stroke="#289ed0"/>
<path d="M1402.5,790.5 C1402.3,792.2 1402.5,798.0 1401.2,800.5 C1400.0,803.0 1397.3,804.5 1395.0,805.5 C1392.7,806.5 1388.8,806.5 1387.5,806.8" stroke="#2c62be"/>
<path d="M1625.0,553.0 C1625.8,557.6 1626.7,577.2 1630.0,580.5 C1633.3,583.8 1640.6,575.7 1645.0,573.0 C1649.4,570.3 1654.4,565.7 1656.2,564.2" stroke="#289ed0"/>
<path d="M1652.5,581.8 C1650.4,582.8 1643.3,585.3 1640.0,588.0 C1636.7,590.7 1634.6,592.4 1632.5,598.0 C1630.4,603.6 1628.3,617.8 1627.5,621.8" stroke="#289ed0"/>
<path d="M1648.8,594.2 C1647.3,595.3 1641.9,597.8 1640.0,600.5 C1638.1,603.2 1638.5,605.9 1637.5,610.5 C1636.5,615.1 1634.4,625.1 1633.8,628.0" stroke="#3abe56"/>
<ellipse cx="1347.0" cy="710.0" rx="5.5" ry="7.0" stroke="#3abe56"/>
<path d="M1172.5,543.8 C1173.3,541.9 1174.6,535.8 1177.5,532.5 C1180.4,529.2 1185.4,526.5 1190.0,523.8 C1194.6,521.0 1199.6,518.8 1205.0,516.2 C1210.4,513.8 1217.9,509.0 1222.5,508.8 C1227.1,508.5 1229.8,512.5 1232.5,515.0 C1235.2,517.5 1237.5,520.4 1238.8,523.8 C1240.0,527.1 1240.2,530.6 1240.0,535.0 C1239.8,539.4 1239.2,546.0 1237.5,550.0 C1235.8,554.0 1232.9,556.9 1230.0,558.8 C1227.1,560.6 1223.8,561.5 1220.0,561.2 C1216.2,561.0 1212.5,558.8 1207.5,557.5 C1202.5,556.2 1195.0,555.0 1190.0,553.8 C1185.0,552.5 1180.4,551.7 1177.5,550.0 C1174.6,548.3 1173.3,544.8 1172.5,543.8" stroke="#a838c0"/>
<path d="M1245.0,553.0 C1245.8,551.7 1248.1,550.5 1250.0,545.0 C1251.9,539.5 1254.8,524.3 1256.2,520.0 C1257.7,515.7 1257.3,518.9 1258.8,519.4 C1260.2,519.9 1262.9,522.4 1265.0,523.1 C1267.1,523.9 1270.0,523.1 1271.2,523.8 C1272.5,524.4 1272.9,525.8 1272.5,526.9 C1272.1,527.9 1269.0,529.2 1268.8,530.0 C1268.5,530.8 1270.2,531.6 1271.2,531.5 C1272.3,531.4 1274.0,530.4 1275.0,529.4 C1276.0,528.4 1276.5,526.1 1277.5,525.6 C1278.5,525.1 1279.8,525.1 1281.2,526.2 C1282.7,527.4 1285.5,529.8 1286.2,532.5 C1287.0,535.2 1285.8,539.9 1285.6,542.5 C1285.4,545.1 1284.3,546.7 1285.0,548.1 C1285.7,549.6 1287.5,551.4 1290.0,551.2 C1292.5,551.1 1296.5,550.0 1300.0,547.5 C1303.5,545.0 1309.0,539.1 1311.2,536.2 C1313.5,533.4 1310.4,531.8 1313.8,530.6 C1317.1,529.5 1326.0,529.4 1331.2,529.4 C1336.5,529.4 1341.9,529.4 1345.0,530.6 C1348.1,531.9 1347.7,535.3 1350.0,536.9 C1352.3,538.4 1357.3,539.5 1358.8,540.0" stroke="#2c62be"/>
<path d="M1243.8,455.0 C1243.9,456.2 1245.0,460.0 1244.4,462.5 C1243.8,465.0 1240.9,466.7 1240.0,470.0 C1239.1,473.3 1238.5,478.8 1238.8,482.5 C1239.0,486.2 1240.2,488.5 1241.2,492.5 C1242.3,496.5 1243.1,502.9 1245.0,506.2 C1246.9,509.6 1250.4,510.9 1252.5,512.5 C1254.6,514.1 1256.2,515.3 1257.5,515.6 C1258.8,515.9 1259.2,515.5 1260.0,514.4 C1260.8,513.2 1260.8,510.4 1262.5,508.8 C1264.2,507.1 1264.4,505.4 1270.0,504.4 C1275.6,503.3 1290.8,503.6 1296.2,502.5 C1301.7,501.4 1300.8,499.6 1302.5,497.5 C1304.2,495.4 1305.8,492.5 1306.2,490.0 C1306.7,487.5 1307.7,485.2 1305.0,482.5 C1302.3,479.8 1295.0,476.2 1290.0,473.8 C1285.0,471.2 1279.2,468.6 1275.0,467.5 C1270.8,466.4 1268.3,467.6 1265.0,467.0 C1261.7,466.4 1257.3,464.9 1255.0,463.8 C1252.7,462.6 1251.8,461.5 1251.2,460.0 C1250.7,458.5 1251.8,455.8 1251.9,455.0" stroke="#2c62be"/>
<ellipse cx="1274.4" cy="520.0" rx="0.4" ry="0.4" stroke="#a838c0"/>
<ellipse cx="1280.0" cy="515.6" rx="3.1" ry="3.1" stroke="#2c62be"/>
<ellipse cx="1280.0" cy="515.6" rx="1.2" ry="1.2" stroke="#289ed0"/>
<ellipse cx="1337.5" cy="455.0" rx="1.9" ry="1.5" stroke="#2c62be"/>
<path d="M1226.2,584.0 C1227.7,582.1 1232.1,575.9 1235.0,572.5 C1237.9,569.1 1240.2,566.5 1243.8,563.8 C1247.3,561.0 1252.7,557.1 1256.2,556.2 C1259.8,555.4 1261.5,557.7 1265.0,558.8 C1268.5,559.8 1273.3,562.0 1277.5,562.5 C1281.7,563.0 1285.8,562.7 1290.0,561.9 C1294.2,561.0 1298.3,559.5 1302.5,557.5 C1306.7,555.5 1309.8,551.7 1315.0,550.0 C1320.2,548.3 1327.5,548.2 1333.8,547.5 C1340.0,546.8 1346.2,546.1 1352.5,545.6 C1358.8,545.1 1366.7,544.9 1371.2,544.4 C1375.8,543.9 1378.5,542.8 1380.0,542.5" stroke="#289ed0"/>
<path d="M1232.5,584.0 C1233.5,582.3 1235.8,576.7 1238.8,573.8 C1241.7,570.8 1245.6,567.5 1250.0,566.2 C1254.4,565.0 1259.4,565.4 1265.0,566.2 C1270.6,567.1 1277.5,571.0 1283.8,571.2 C1290.0,571.5 1297.3,569.6 1302.5,567.5 C1307.7,565.4 1309.8,560.6 1315.0,558.8 C1320.2,556.9 1327.5,557.3 1333.8,556.2 C1340.0,555.2 1346.2,553.8 1352.5,552.5 C1358.8,551.2 1366.7,549.7 1371.2,548.8 C1375.8,547.8 1378.5,547.2 1380.0,546.9" stroke="#20b8b0"/>
<path d="M1243.8,584.0 C1244.0,582.8 1243.5,578.3 1245.0,576.9 C1246.5,575.5 1249.2,575.6 1252.5,575.6 C1255.8,575.6 1259.8,575.9 1265.0,576.9 C1270.2,577.8 1279.6,580.1 1283.8,581.2 C1287.9,582.4 1289.0,583.5 1290.0,584.0" stroke="#3abe56"/>
<path d="M1317.5,575.0 C1318.8,574.6 1321.2,573.3 1325.0,572.5 C1328.8,571.7 1336.7,571.2 1340.0,570.0 C1343.3,568.8 1340.8,566.7 1345.0,565.0 C1349.2,563.3 1359.2,561.9 1365.0,560.0 C1370.8,558.1 1377.5,554.8 1380.0,553.8" stroke="#3abe56"/>
<path d="M1338.8,580.0 C1339.0,578.8 1337.7,574.6 1340.0,572.5 C1342.3,570.4 1347.3,569.2 1352.5,567.5 C1357.7,565.8 1366.7,564.2 1371.2,562.5 C1375.8,560.8 1378.5,558.3 1380.0,557.5" stroke="#94cc20"/>
<ellipse cx="1302.5" cy="573.8" rx="1.2" ry="1.2" stroke="#3abe56"/>
<ellipse cx="1308.1" cy="573.1" rx="2.5" ry="3.1" stroke="#289ed0"/>
<ellipse cx="1316.9" cy="573.8" rx="1.2" ry="1.2" stroke="#20b8b0"/>
<ellipse cx="1331.2" cy="574.4" rx="1.2" ry="1.9" stroke="#3abe56"/>
<ellipse cx="1307.5" cy="584.0" rx="3.8" ry="2.5" stroke="#289ed0"/>
<ellipse cx="1322.5" cy="578.8" rx="3.1" ry="1.9" stroke="#dccc1c"/>
<ellipse cx="1346.2" cy="579.4" rx="2.5" ry="1.9" stroke="#3abe56"/>
<ellipse cx="1360.0" cy="578.8" rx="3.1" ry="1.9" stroke="#dccc1c"/>
<path d="M1380.0,541.2 C1381.2,540.6 1385.0,538.5 1387.5,537.5 C1390.0,536.5 1393.5,537.5 1395.0,535.0 C1396.5,532.5 1396.0,526.2 1396.2,522.5 C1396.5,518.8 1395.6,515.4 1396.2,512.5 C1396.9,509.6 1398.1,507.1 1400.0,505.0 C1401.9,502.9 1404.8,501.1 1407.5,500.0 C1410.2,498.9 1413.8,498.6 1416.2,498.1 C1418.8,497.6 1420.6,497.4 1422.5,496.9 C1424.4,496.4 1425.8,496.1 1427.5,495.0 C1429.2,493.9 1431.2,492.5 1432.5,490.0 C1433.8,487.5 1434.0,483.1 1435.0,480.0 C1436.0,476.9 1437.1,474.0 1438.8,471.2 C1440.4,468.5 1442.3,465.7 1445.0,463.8 C1447.7,461.8 1452.5,460.0 1455.0,459.4 C1457.5,458.8 1457.9,458.9 1460.0,460.0 C1462.1,461.1 1465.0,463.8 1467.5,466.2 C1470.0,468.8 1472.5,472.3 1475.0,475.0 C1477.5,477.7 1480.4,480.4 1482.5,482.5 C1484.6,484.6 1486.7,486.7 1487.5,487.5" stroke="#289ed0"/>
<path d="M1501.2,493.1 C1501.9,493.9 1504.0,495.5 1505.0,497.5 C1506.0,499.5 1507.1,502.3 1507.5,505.0 C1507.9,507.7 1508.1,511.5 1507.5,513.8 C1506.9,516.0 1506.2,517.3 1503.8,518.8 C1501.2,520.2 1496.5,521.4 1492.5,522.5 C1488.5,523.6 1484.2,524.6 1480.0,525.6 C1475.8,526.7 1471.5,527.4 1467.5,528.8 C1463.5,530.1 1458.6,531.7 1456.2,533.8 C1453.9,535.8 1453.5,539.0 1453.1,541.2 C1452.7,543.5 1454.3,545.6 1453.8,547.5 C1453.2,549.4 1450.6,551.7 1450.0,552.5" stroke="#289ed0"/>
<path d="M1380.0,543.8 C1381.2,543.3 1384.0,541.9 1387.5,541.2 C1391.0,540.6 1397.9,539.4 1401.2,540.0 C1404.6,540.6 1406.0,542.5 1407.5,545.0 C1409.0,547.5 1409.2,552.1 1410.0,555.0 C1410.8,557.9 1410.8,561.0 1412.5,562.5 C1414.2,564.0 1417.1,563.8 1420.0,563.8 C1422.9,563.8 1426.7,562.9 1430.0,562.5 C1433.3,562.1 1437.5,562.1 1440.0,561.2 C1442.5,560.4 1444.4,559.4 1445.0,557.5 C1445.6,555.6 1443.8,552.1 1443.8,550.0 C1443.8,547.9 1444.8,545.8 1445.0,545.0" stroke="#20b8b0"/>
<path d="M1417.5,538.1 C1416.5,537.2 1413.3,534.7 1411.2,532.5 C1409.2,530.3 1406.2,527.5 1405.0,525.0 C1403.8,522.5 1403.3,520.0 1403.8,517.5 C1404.2,515.0 1404.6,512.3 1407.5,510.0 C1410.4,507.7 1418.5,505.4 1421.2,503.8 C1424.0,502.1 1422.5,501.9 1423.8,500.0 C1425.0,498.1 1426.7,495.0 1428.8,492.5 C1430.8,490.0 1434.0,487.1 1436.2,485.0 C1438.5,482.9 1440.6,480.8 1442.5,480.0 C1444.4,479.2 1446.2,479.2 1447.5,480.0 C1448.8,480.8 1450.0,483.1 1450.0,485.0 C1450.0,486.9 1447.1,489.8 1447.5,491.2 C1447.9,492.7 1449.6,493.5 1452.5,493.8 C1455.4,494.0 1460.8,492.3 1465.0,492.5 C1469.2,492.7 1473.8,493.8 1477.5,495.0 C1481.2,496.2 1485.0,498.1 1487.5,500.0 C1490.0,501.9 1492.1,504.2 1492.5,506.2 C1492.9,508.3 1492.9,510.8 1490.0,512.5 C1487.1,514.2 1480.0,515.1 1475.0,516.2 C1470.0,517.4 1464.2,519.0 1460.0,519.4 C1455.8,519.8 1452.1,518.2 1450.0,518.8 C1447.9,519.3 1448.3,521.5 1447.5,522.5 C1446.7,523.5 1445.8,525.8 1445.0,525.0 C1444.2,524.2 1444.2,519.2 1442.5,517.5 C1440.8,515.8 1437.3,514.6 1435.0,515.0 C1432.7,515.4 1430.0,518.3 1428.8,520.0 C1427.5,521.7 1428.5,522.9 1427.5,525.0 C1426.5,527.1 1424.2,530.3 1422.5,532.5 C1420.8,534.7 1418.3,537.2 1417.5,538.1" stroke="#3abe56"/>
<path d="M1421.2,510.0 C1422.3,508.8 1425.2,505.4 1427.5,502.5 C1429.8,499.6 1433.1,495.4 1435.0,492.5 C1436.9,489.6 1437.9,484.6 1438.8,485.0 C1439.6,485.4 1439.8,491.0 1440.0,495.0 C1440.2,499.0 1440.8,506.2 1440.0,508.8 C1439.2,511.2 1437.1,509.7 1435.0,510.0 C1432.9,510.3 1429.8,510.6 1427.5,510.6 C1425.2,510.6 1422.3,510.1 1421.2,510.0" stroke="#94cc20"/>
<path d="M1428.8,502.5 C1429.6,501.5 1432.3,497.1 1433.8,496.2 C1435.2,495.4 1437.1,496.5 1437.5,497.5 C1437.9,498.5 1437.5,501.5 1436.2,502.5 C1435.0,503.5 1431.0,503.5 1430.0,503.8" stroke="#dccc1c"/>
<ellipse cx="1453.1" cy="475.6" rx="2.5" ry="2.5" stroke="#289ed0"/>
<ellipse cx="1457.5" cy="480.6" rx="1.2" ry="1.2" stroke="#3abe56"/>
<ellipse cx="1443.5" cy="485.0" rx="1.2" ry="1.9" stroke="#289ed0"/>
<ellipse cx="1457.2" cy="489.8" rx="1.2" ry="1.2" stroke="#289ed0"/>
<ellipse cx="1443.1" cy="501.9" rx="1.5" ry="3.1" stroke="#289ed0"/>
<ellipse cx="1450.6" cy="502.5" rx="3.1" ry="4.4" stroke="#94cc20"/>
<ellipse cx="1458.1" cy="501.9" rx="1.5" ry="4.4" stroke="#94cc20"/>
<ellipse cx="1450.6" cy="513.8" rx="8.1" ry="2.8" stroke="#94cc20"/>
<ellipse cx="1422.5" cy="489.4" rx="2.8" ry="1.2" stroke="#a838c0"/>
<ellipse cx="1422.8" cy="518.5" rx="1.5" ry="1.2" stroke="#94cc20"/>
<ellipse cx="1435.6" cy="518.8" rx="1.5" ry="0.8" stroke="#2c62be"/>
<ellipse cx="1441.2" cy="528.1" rx="2.5" ry="1.9" stroke="#289ed0"/>
<ellipse cx="1418.5" cy="531.5" rx="0.5" ry="1.2" stroke="#3abe56"/>
<path d="M1460.0,541.2 C1460.4,541.5 1461.9,541.2 1462.5,542.5 C1463.1,543.8 1462.9,547.3 1463.8,548.8 C1464.6,550.2 1466.8,550.2 1467.5,551.2 C1468.2,552.3 1468.8,554.3 1468.1,555.0 C1467.5,555.7 1465.1,555.8 1463.8,555.6 C1462.4,555.4 1460.8,555.1 1460.0,553.8 C1459.2,552.4 1458.8,549.6 1458.8,547.5 C1458.8,545.4 1459.8,542.3 1460.0,541.2" stroke="#2c62be"/>
<path d="M1420.0,546.2 C1421.0,545.4 1424.2,542.3 1426.2,541.2 C1428.3,540.2 1431.0,539.8 1432.5,540.0 C1434.0,540.2 1434.2,541.2 1435.0,542.5 C1435.8,543.8 1437.9,546.5 1437.5,547.5 C1437.1,548.5 1434.8,548.5 1432.5,548.8 C1430.2,549.0 1425.8,549.2 1423.8,548.8 C1421.7,548.3 1420.6,546.7 1420.0,546.2" stroke="#289ed0"/>
<ellipse cx="1431.9" cy="542.5" rx="1.5" ry="1.2" stroke="#2c62be"/>
<ellipse cx="1423.8" cy="547.1" rx="1.9" ry="0.8" stroke="#2c62be"/>
<path d="M1412.5,546.2 C1412.7,547.5 1412.9,552.3 1413.8,553.8 C1414.6,555.2 1416.6,554.2 1417.5,555.0 C1418.4,555.8 1419.6,557.9 1419.4,558.8 C1419.2,559.6 1417.5,560.2 1416.2,560.0 C1415.0,559.8 1412.8,559.0 1411.9,557.5 C1410.9,556.0 1410.5,553.1 1410.6,551.2 C1410.7,549.4 1412.2,547.1 1412.5,546.2" stroke="#289ed0"/>
<path d="M1380.0,550.0 C1381.7,549.6 1386.7,548.0 1390.0,547.5 C1393.3,547.0 1397.3,546.5 1400.0,546.9 C1402.7,547.3 1404.4,547.8 1406.2,550.0 C1408.1,552.2 1410.0,557.5 1411.2,560.0 C1412.5,562.5 1412.7,563.8 1413.8,565.0 C1414.8,566.2 1413.8,567.1 1417.5,567.5 C1421.2,567.9 1431.7,568.1 1436.2,567.5 C1440.8,566.9 1443.1,565.0 1445.0,563.8 C1446.9,562.5 1447.5,561.7 1447.5,560.0 C1447.5,558.3 1445.6,555.8 1445.0,553.8 C1444.4,551.7 1442.9,548.1 1443.8,547.5 C1444.6,546.9 1448.8,548.8 1450.0,550.0 C1451.2,551.2 1450.0,551.7 1451.2,555.0 C1452.5,558.3 1455.0,565.8 1457.5,570.0 C1460.0,574.2 1464.2,577.7 1466.2,580.0 C1468.3,582.3 1469.4,583.3 1470.0,584.0" stroke="#20b8b0"/>
<path d="M1380.0,552.5 C1381.7,551.9 1386.9,549.2 1390.0,548.8 C1393.1,548.3 1396.5,549.0 1398.8,550.0 C1401.0,551.0 1403.1,552.9 1403.8,555.0 C1404.4,557.1 1403.1,560.4 1402.5,562.5 C1401.9,564.6 1401.2,566.0 1400.0,567.5 C1398.8,569.0 1397.1,570.6 1395.0,571.2 C1392.9,571.9 1390.0,571.5 1387.5,571.2 C1385.0,571.0 1381.2,570.2 1380.0,570.0" stroke="#94cc20"/>
<path d="M1415.0,567.5 C1416.7,567.3 1422.1,566.7 1425.0,566.2 C1427.9,565.8 1430.2,565.3 1432.5,565.0 C1434.8,564.7 1436.5,564.2 1438.8,564.4 C1441.0,564.6 1445.2,565.5 1446.2,566.2 C1447.3,567.0 1446.7,568.2 1445.0,568.8 C1443.3,569.3 1439.2,569.0 1436.2,569.4 C1433.3,569.8 1430.6,571.0 1427.5,571.2 C1424.4,571.5 1419.2,570.7 1417.5,570.6" stroke="#94cc20"/>
<ellipse cx="1392.5" cy="570.6" rx="1.5" ry="1.5" stroke="#d44422"/>
<ellipse cx="1392.5" cy="570.6" rx="3.1" ry="3.1" stroke="#e49218"/>
<ellipse cx="1392.5" cy="570.6" rx="4.4" ry="4.4" stroke="#dccc1c"/>
<ellipse cx="1383.8" cy="570.0" rx="1.2" ry="1.2" stroke="#3abe56"/>
<ellipse cx="1399.4" cy="570.6" rx="0.8" ry="0.8" stroke="#3abe56"/>
<ellipse cx="1403.8" cy="571.2" rx="2.5" ry="5.0" stroke="#94cc20"/>
<ellipse cx="1423.1" cy="571.2" rx="2.5" ry="1.5" stroke="#94cc20"/>
<ellipse cx="1388.1" cy="579.4" rx="1.5" ry="1.5" stroke="#3abe56"/>
<ellipse cx="1435.0" cy="561.9" rx="4.4" ry="1.5" stroke="#20b8b0"/>
<ellipse cx="1455.0" cy="562.2" rx="2.8" ry="0.8" stroke="#2c62be"/>
<ellipse cx="1450.6" cy="576.2" rx="1.2" ry="1.2" stroke="#289ed0"/>
<ellipse cx="1428.8" cy="581.2" rx="3.1" ry="1.2" stroke="#289ed0"/>
<path d="M1481.2,584.0 C1481.7,582.3 1481.9,577.1 1483.8,573.8 C1485.6,570.4 1489.0,567.1 1492.5,563.8 C1496.0,560.4 1501.2,556.9 1505.0,553.8 C1508.8,550.6 1512.1,547.5 1515.0,545.0 C1517.9,542.5 1520.0,539.4 1522.5,538.8 C1525.0,538.1 1527.7,539.8 1530.0,541.2 C1532.3,542.7 1534.6,544.2 1536.2,547.5 C1537.9,550.8 1538.5,556.7 1540.0,561.2 C1541.5,565.8 1543.5,571.7 1545.0,575.0 C1546.5,578.3 1547.1,579.8 1548.8,581.2 C1550.4,582.8 1554.0,583.5 1555.0,584.0" stroke="#2c62be"/>
<path d="M1512.5,565.0 C1513.3,563.8 1515.8,559.4 1517.5,557.5 C1519.2,555.6 1521.0,553.8 1522.5,553.8 C1524.0,553.8 1525.0,555.2 1526.2,557.5 C1527.5,559.8 1529.0,564.6 1530.0,567.5 C1531.0,570.4 1532.3,572.9 1532.5,575.0 C1532.7,577.1 1532.5,579.1 1531.2,580.0 C1530.0,580.9 1527.3,581.2 1525.0,580.6 C1522.7,580.0 1519.6,577.8 1517.5,576.2 C1515.4,574.7 1513.3,573.1 1512.5,571.2 C1511.7,569.4 1512.5,566.0 1512.5,565.0" stroke="#a838c0"/>
<path d="M1555.0,506.9 C1554.0,507.4 1550.8,508.2 1548.8,510.0 C1546.7,511.8 1544.0,514.8 1542.5,517.5 C1541.0,520.2 1540.0,523.8 1540.0,526.2 C1540.0,528.8 1540.4,530.2 1542.5,532.5 C1544.6,534.8 1549.4,537.9 1552.5,540.0 C1555.6,542.1 1559.0,542.9 1561.2,545.0 C1563.5,547.1 1565.4,549.4 1566.2,552.5 C1567.1,555.6 1565.6,560.0 1566.2,563.8 C1566.9,567.5 1568.5,571.6 1570.0,575.0 C1571.5,578.4 1574.2,582.5 1575.0,584.0" stroke="#289ed0"/>
<path d="M1584.4,538.8 C1583.6,540.0 1581.4,543.1 1580.0,546.2 C1578.6,549.4 1577.3,554.0 1576.2,557.5 C1575.2,561.0 1573.8,563.8 1573.8,567.5 C1573.8,571.2 1575.2,577.2 1576.2,580.0 C1577.3,582.8 1579.4,583.3 1580.0,584.0" stroke="#20b8b0"/>
<path d="M1591.2,543.8 C1590.4,545.2 1587.7,549.0 1586.2,552.5 C1584.8,556.0 1582.7,561.5 1582.5,565.0 C1582.3,568.5 1583.3,572.1 1585.0,573.8 C1586.7,575.4 1589.4,575.6 1592.5,575.0 C1595.6,574.4 1601.2,572.7 1603.8,570.0 C1606.2,567.3 1607.3,562.4 1607.5,558.8 C1607.7,555.1 1605.4,549.9 1605.0,548.1" stroke="#94cc20"/>
<path d="M1611.2,544.4 C1611.9,546.1 1614.2,551.1 1615.0,555.0 C1615.8,558.9 1616.7,563.8 1616.2,567.5 C1615.8,571.2 1614.4,574.8 1612.5,577.5 C1610.6,580.2 1606.2,582.9 1605.0,584.0" stroke="#20b8b0"/>
<path d="M1226.2,584.0 C1226.0,586.1 1226.0,592.3 1225.0,596.5 C1224.0,600.7 1222.5,605.0 1220.0,609.0 C1217.5,613.0 1213.5,616.1 1210.0,620.2 C1206.5,624.4 1202.7,632.1 1198.8,634.0 C1194.8,635.9 1190.2,631.9 1186.2,631.5 C1182.3,631.1 1178.5,630.7 1175.0,631.5 C1171.5,632.3 1167.7,634.0 1165.0,636.5 C1162.3,639.0 1160.0,642.8 1158.8,646.5 C1157.5,650.2 1157.3,654.8 1157.5,659.0 C1157.7,663.2 1159.8,668.2 1160.0,671.5 C1160.2,674.8 1160.0,677.1 1158.8,679.0 C1157.5,680.9 1155.6,681.5 1152.5,682.8 C1149.4,684.0 1142.1,685.9 1140.0,686.5" stroke="#289ed0"/>
<path d="M1233.8,584.0 C1233.5,586.1 1233.5,592.3 1232.5,596.5 C1231.5,600.7 1230.0,605.2 1227.5,609.0 C1225.0,612.8 1220.8,614.8 1217.5,619.0 C1214.2,623.2 1210.6,630.0 1207.5,634.0 C1204.4,638.0 1201.2,639.6 1198.8,642.8 C1196.2,645.9 1194.0,650.5 1192.5,652.8 C1191.0,655.0 1191.0,656.5 1190.0,656.5 C1189.0,656.5 1186.7,654.0 1186.2,652.8 C1185.8,651.5 1188.3,650.5 1187.5,649.0 C1186.7,647.5 1183.8,645.0 1181.2,644.0 C1178.8,643.0 1174.8,642.1 1172.5,642.8 C1170.2,643.4 1168.8,645.0 1167.5,647.8 C1166.2,650.5 1165.6,655.0 1165.0,659.0 C1164.4,663.0 1164.4,667.3 1163.8,671.5 C1163.1,675.7 1161.9,680.2 1161.2,684.0 C1160.6,687.8 1160.4,690.9 1160.0,694.0 C1159.6,697.1 1158.8,699.6 1158.8,702.8 C1158.8,705.9 1159.8,711.3 1160.0,713.0" stroke="#20b8b0"/>
<ellipse cx="1188.1" cy="653.4" rx="1.9" ry="1.9" stroke="#2c62be"/>
<path d="M1243.8,584.0 C1243.8,585.2 1244.4,589.0 1243.8,591.5 C1243.1,594.0 1242.3,596.5 1240.0,599.0 C1237.7,601.5 1233.1,603.6 1230.0,606.5 C1226.9,609.4 1224.2,612.8 1221.2,616.5 C1218.3,620.2 1214.8,624.8 1212.5,629.0 C1210.2,633.2 1208.8,637.3 1207.5,641.5 C1206.2,645.7 1205.8,650.7 1205.0,654.0 C1204.2,657.3 1203.3,660.0 1202.5,661.5 C1201.7,663.0 1199.2,662.1 1200.0,662.8 C1200.8,663.4 1205.8,664.4 1207.5,665.2 C1209.2,666.1 1210.4,666.9 1210.0,667.8 C1209.6,668.6 1207.1,669.8 1205.0,670.2 C1202.9,670.7 1198.8,670.2 1197.5,670.2" stroke="#3abe56"/>
<path d="M1177.5,661.5 C1177.9,661.9 1180.2,662.8 1180.0,664.0 C1179.8,665.2 1176.9,666.9 1176.2,669.0 C1175.6,671.1 1175.6,674.8 1176.2,676.5 C1176.9,678.2 1179.0,677.3 1180.0,679.0 C1181.0,680.7 1182.7,684.6 1182.5,686.5 C1182.3,688.4 1180.4,689.0 1178.8,690.2 C1177.1,691.5 1174.4,693.6 1172.5,694.0 C1170.6,694.4 1168.5,694.4 1167.5,692.8 C1166.5,691.1 1166.2,687.8 1166.2,684.0 C1166.2,680.2 1166.5,673.4 1167.5,670.2 C1168.5,667.1 1170.8,666.7 1172.5,665.2 C1174.2,663.8 1176.7,662.1 1177.5,661.5" stroke="#94cc20"/>
<path d="M1183.8,676.5 C1184.8,676.1 1187.7,674.8 1190.0,674.0 C1192.3,673.2 1195.6,671.1 1197.5,671.5 C1199.4,671.9 1200.8,674.4 1201.2,676.5 C1201.7,678.6 1200.2,681.3 1200.0,684.0 C1199.8,686.7 1200.4,690.5 1200.0,692.8 C1199.6,695.0 1198.8,697.3 1197.5,697.8 C1196.2,698.2 1193.8,696.7 1192.5,695.2 C1191.2,693.8 1191.2,690.9 1190.0,689.0 C1188.8,687.1 1186.2,685.7 1185.0,684.0 C1183.8,682.3 1182.7,680.2 1182.5,679.0 C1182.3,677.8 1183.5,676.9 1183.8,676.5" stroke="#dccc1c"/>
<ellipse cx="1188.1" cy="681.5" rx="0.5" ry="0.5" stroke="#d44422"/>
<ellipse cx="1196.9" cy="691.8" rx="0.5" ry="0.5" stroke="#d44422"/>
<ellipse cx="1200.0" cy="667.1" rx="5.6" ry="1.9" stroke="#20b8b0"/>
<ellipse cx="1197.5" cy="667.1" rx="2.5" ry="1.2" stroke="#2c62be"/>
<path d="M1200.0,671.5 C1201.4,671.7 1206.7,669.6 1208.1,672.8 C1209.6,675.9 1208.1,686.9 1208.8,690.2 C1209.4,693.6 1211.7,692.1 1211.9,692.8 C1212.1,693.4 1212.2,693.8 1210.0,694.0 C1207.8,694.2 1201.2,692.3 1198.8,694.0 C1196.2,695.7 1194.6,702.0 1195.0,704.0 C1195.4,706.0 1199.2,705.9 1201.2,705.9 C1203.3,705.9 1206.1,704.9 1207.5,704.0 C1208.9,703.1 1209.1,700.9 1209.4,700.2" stroke="#3abe56"/>
<path d="M1220.0,654.0 C1220.4,650.7 1220.8,640.2 1222.5,634.0 C1224.2,627.8 1226.0,621.5 1230.0,616.5 C1234.0,611.5 1240.4,606.9 1246.2,604.0 C1252.1,601.1 1259.8,600.5 1265.0,599.0 C1270.2,597.5 1273.3,596.0 1277.5,595.2 C1281.7,594.5 1286.2,594.2 1290.0,594.6 C1293.8,595.0 1296.9,596.8 1300.0,597.8 C1303.1,598.7 1307.3,599.8 1308.8,600.2" stroke="#3abe56"/>
<path d="M1243.8,621.5 C1244.2,620.7 1243.8,618.0 1246.2,616.5 C1248.8,615.0 1254.6,614.0 1258.8,612.8 C1262.9,611.5 1268.1,610.0 1271.2,609.0 C1274.4,608.0 1275.2,606.9 1277.5,606.5 C1279.8,606.1 1284.2,605.5 1285.0,606.5 C1285.8,607.5 1284.2,610.9 1282.5,612.8 C1280.8,614.6 1277.5,615.7 1275.0,617.8 C1272.5,619.8 1270.4,623.2 1267.5,625.2 C1264.6,627.3 1260.4,629.6 1257.5,630.2 C1254.6,630.9 1252.3,629.8 1250.0,629.0 C1247.7,628.2 1244.8,626.5 1243.8,625.2 C1242.7,624.0 1243.8,622.1 1243.8,621.5" stroke="#dccc1c"/>
<path d="M1220.0,661.5 C1221.2,660.9 1224.6,659.0 1227.5,657.8 C1230.4,656.5 1234.6,656.1 1237.5,654.0 C1240.4,651.9 1242.5,646.7 1245.0,645.2 C1247.5,643.8 1250.0,647.1 1252.5,645.2 C1255.0,643.4 1257.9,636.3 1260.0,634.0 C1262.1,631.7 1263.8,631.3 1265.0,631.5 C1266.2,631.7 1267.5,633.6 1267.5,635.2 C1267.5,636.9 1266.5,639.6 1265.0,641.5 C1263.5,643.4 1260.4,644.4 1258.8,646.5 C1257.1,648.6 1256.9,651.9 1255.0,654.0 C1253.1,656.1 1249.4,656.9 1247.5,659.0 C1245.6,661.1 1245.8,665.2 1243.8,666.5 C1241.7,667.8 1237.7,665.7 1235.0,666.5 C1232.3,667.3 1229.8,669.4 1227.5,671.5 C1225.2,673.6 1222.9,677.1 1221.2,679.0 C1219.6,680.9 1218.3,684.0 1217.5,682.8 C1216.7,681.5 1215.8,675.0 1216.2,671.5 C1216.7,668.0 1219.4,663.2 1220.0,661.5" stroke="#94cc20"/>
<path d="M1215.0,696.5 C1215.8,695.7 1217.5,694.0 1220.0,691.5 C1222.5,689.0 1226.9,683.2 1230.0,681.5 C1233.1,679.8 1235.8,682.1 1238.8,681.5 C1241.7,680.9 1244.2,679.6 1247.5,677.8 C1250.8,675.9 1255.0,672.5 1258.8,670.2 C1262.5,668.0 1267.5,665.4 1270.0,664.0 C1272.5,662.6 1273.1,662.4 1273.8,662.1" stroke="#3abe56"/>
<path d="M1230.0,684.0 C1231.7,683.8 1236.2,684.0 1240.0,682.8 C1243.8,681.5 1248.3,679.2 1252.5,676.5 C1256.7,673.8 1261.7,668.8 1265.0,666.5 C1268.3,664.2 1271.2,663.4 1272.5,662.8" stroke="#20b8b0"/>
<path d="M1257.5,681.5 C1257.7,680.7 1257.3,677.8 1258.8,676.5 C1260.2,675.2 1265.0,674.4 1266.2,674.0" stroke="#289ed0"/>
<path d="M1267.5,669.0 C1268.1,668.6 1270.4,666.3 1271.2,666.5 C1272.1,666.7 1272.9,669.4 1272.5,670.2 C1272.1,671.1 1269.4,671.3 1268.8,671.5" stroke="#289ed0"/>
<path d="M1270.0,600.2 C1272.1,600.9 1278.3,602.5 1282.5,604.0 C1286.7,605.5 1291.7,606.9 1295.0,609.0 C1298.3,611.1 1301.2,615.2 1302.5,616.5" stroke="#94cc20"/>
<ellipse cx="1307.5" cy="587.8" rx="2.5" ry="2.5" stroke="#2c62be"/>
<ellipse cx="1307.5" cy="587.8" rx="4.4" ry="4.4" stroke="#20b8b0"/>
<path d="M1300.0,584.0 C1300.4,585.2 1301.2,589.2 1302.5,591.5 C1303.8,593.8 1305.8,597.8 1307.5,597.8 C1309.2,597.8 1311.2,593.8 1312.5,591.5 C1313.8,589.2 1314.6,585.2 1315.0,584.0" stroke="#3abe56"/>
<path d="M1335.0,585.2 C1335.8,586.3 1337.1,590.7 1340.0,591.5 C1342.9,592.3 1349.0,590.7 1352.5,590.2 C1356.0,589.8 1360.0,590.0 1361.2,589.0 C1362.5,588.0 1360.2,584.8 1360.0,584.0" stroke="#dccc1c"/>
<path d="M1300.0,601.5 C1301.2,602.1 1305.0,604.0 1307.5,605.2 C1310.0,606.5 1313.3,607.5 1315.0,609.0 C1316.7,610.5 1317.9,612.5 1317.5,614.0 C1317.1,615.5 1315.0,616.9 1312.5,617.8 C1310.0,618.6 1305.2,618.4 1302.5,619.0 C1299.8,619.6 1297.9,620.0 1296.2,621.5 C1294.6,623.0 1293.5,625.5 1292.5,627.8 C1291.5,630.0 1290.2,633.0 1290.0,635.2 C1289.8,637.5 1290.6,639.6 1291.2,641.5 C1291.9,643.4 1291.5,645.7 1293.8,646.5 C1296.0,647.3 1302.3,647.3 1305.0,646.5 C1307.7,645.7 1309.2,643.2 1310.0,641.5 C1310.8,639.8 1311.2,637.5 1310.0,636.5 C1308.8,635.5 1305.4,635.2 1302.5,635.2 C1299.6,635.2 1294.2,636.3 1292.5,636.5" stroke="#94cc20"/>
<ellipse cx="1302.5" cy="641.5" rx="7.5" ry="4.4" stroke="#dccc1c"/>
<ellipse cx="1301.2" cy="645.2" rx="0.4" ry="0.4" stroke="#d44422"/>
<ellipse cx="1297.5" cy="615.9" rx="1.9" ry="1.9" stroke="#94cc20"/>
<ellipse cx="1297.5" cy="615.9" rx="2.8" ry="2.8" stroke="#e49218"/>
<path d="M1315.0,630.2 C1316.7,629.2 1321.2,624.6 1325.0,624.0 C1328.8,623.4 1335.4,626.1 1337.5,626.5" stroke="#3abe56"/>
<path d="M1325.0,634.0 C1325.8,633.6 1328.8,631.1 1330.0,631.5 C1331.2,631.9 1332.9,635.0 1332.5,636.5 C1332.1,638.0 1328.8,640.0 1327.5,640.2 C1326.2,640.5 1325.4,638.2 1325.0,637.8" stroke="#2c62be"/>
<ellipse cx="1340.0" cy="636.5" rx="1.5" ry="1.5" stroke="#2c62be"/>
<ellipse cx="1345.0" cy="634.0" rx="1.2" ry="2.5" stroke="#2c62be"/>
<path d="M1312.5,644.0 C1314.0,643.8 1318.8,642.8 1321.2,642.8 C1323.8,642.8 1325.6,644.2 1327.5,644.0 C1329.4,643.8 1331.2,643.2 1332.5,641.5 C1333.8,639.8 1333.8,635.7 1335.0,634.0 C1336.2,632.3 1337.5,631.9 1340.0,631.5 C1342.5,631.1 1348.3,630.0 1350.0,631.5 C1351.7,633.0 1350.8,637.8 1350.0,640.2 C1349.2,642.8 1347.3,645.2 1345.0,646.5 C1342.7,647.8 1338.5,647.3 1336.2,647.8 C1334.0,648.2 1332.1,648.8 1331.2,649.0" stroke="#20b8b0"/>
<path d="M1323.8,602.8 C1324.8,602.3 1327.3,600.5 1330.0,600.2 C1332.7,600.0 1335.8,601.5 1340.0,601.5 C1344.2,601.5 1352.3,599.0 1355.0,600.2 C1357.7,601.5 1356.5,606.3 1356.2,609.0 C1356.0,611.7 1355.6,614.4 1353.8,616.5 C1351.9,618.6 1346.9,620.0 1345.0,621.5 C1343.1,623.0 1342.9,624.6 1342.5,625.2" stroke="#3abe56"/>
<path d="M1355.0,617.8 C1355.8,617.3 1358.8,614.0 1360.0,615.2 C1361.2,616.5 1362.3,622.1 1362.5,625.2 C1362.7,628.4 1362.5,632.1 1361.2,634.0 C1360.0,635.9 1356.5,637.3 1355.0,636.5 C1353.5,635.7 1352.5,632.1 1352.5,629.0 C1352.5,625.9 1354.6,619.6 1355.0,617.8" stroke="#94cc20"/>
<ellipse cx="1368.8" cy="600.2" rx="1.9" ry="4.4" stroke="#3abe56"/>
<ellipse cx="1373.8" cy="594.0" rx="1.2" ry="1.2" stroke="#3abe56"/>
<ellipse cx="1367.5" cy="637.1" rx="1.9" ry="1.9" stroke="#3abe56"/>
<path d="M1370.0,627.8 L1380.0,625.2" stroke="#20b8b0"/>
<path d="M1301.2,602.8 C1302.1,602.1 1304.0,600.0 1306.2,599.0 C1308.5,598.0 1312.7,598.0 1315.0,596.5 C1317.3,595.0 1319.6,591.9 1320.0,590.2 C1320.4,588.6 1317.9,587.1 1317.5,586.5" stroke="#dccc1c"/>
<ellipse cx="1307.5" cy="607.8" rx="2.5" ry="1.9" stroke="#94cc20"/>
<ellipse cx="1313.8" cy="609.0" rx="3.8" ry="2.5" stroke="#dccc1c"/>
<path d="M1298.8,705.2 C1300.2,703.8 1305.6,700.5 1307.5,696.5 C1309.4,692.5 1309.6,686.9 1310.0,681.5 C1310.4,676.1 1309.2,668.6 1310.0,664.0 C1310.8,659.4 1312.5,656.9 1315.0,654.0 C1317.5,651.1 1323.3,647.8 1325.0,646.5" stroke="#289ed0"/>
<path d="M1330.0,646.5 C1330.8,647.8 1333.1,650.9 1335.0,654.0 C1336.9,657.1 1340.0,661.1 1341.2,665.2 C1342.5,669.4 1342.7,675.0 1342.5,679.0 C1342.3,683.0 1341.2,686.5 1340.0,689.0 C1338.8,691.5 1337.1,692.1 1335.0,694.0 C1332.9,695.9 1329.0,697.1 1327.5,700.2 C1326.0,703.4 1326.5,710.9 1326.2,713.0" stroke="#20b8b0"/>
<ellipse cx="1329.4" cy="674.0" rx="8.1" ry="9.8" stroke="#2c62be"/>
<path d="M1351.2,681.5 C1351.5,678.2 1351.2,665.5 1352.5,661.5 C1353.8,657.5 1354.2,658.6 1358.8,657.8 C1363.3,656.9 1376.5,656.7 1380.0,656.5" stroke="#3abe56"/>
<path d="M1352.5,682.8 C1354.2,682.1 1359.4,680.0 1362.5,679.0 C1365.6,678.0 1368.3,676.9 1371.2,676.5 C1374.2,676.1 1378.5,676.5 1380.0,676.5" stroke="#3abe56"/>
<path d="M1365.0,713.0 C1365.4,710.2 1365.8,700.5 1367.5,696.5 C1369.2,692.5 1372.9,690.9 1375.0,689.0 C1377.1,687.1 1379.2,685.9 1380.0,685.2" stroke="#20b8b0"/>
<path d="M1306.2,713.0 C1307.3,712.1 1310.4,708.4 1312.5,707.8 C1314.6,707.1 1317.1,708.1 1318.8,709.0 C1320.4,709.9 1321.9,712.3 1322.5,713.0" stroke="#2c62be"/>
<ellipse cx="1159.4" cy="677.1" rx="1.2" ry="1.2" stroke="#2c62be"/>
<ellipse cx="1160.0" cy="687.1" rx="1.5" ry="1.5" stroke="#289ed0"/>
<ellipse cx="1225.0" cy="692.1" rx="2.5" ry="1.9" stroke="#289ed0"/>
<ellipse cx="1210.0" cy="701.5" rx="1.2" ry="1.2" stroke="#3abe56"/>
<path d="M1182.5,713.0 C1182.7,711.1 1182.9,704.7 1183.8,701.5 C1184.6,698.3 1186.9,695.2 1187.5,694.0" stroke="#3abe56"/>
<path d="M1232.5,684.0 C1233.3,684.6 1236.2,686.1 1237.5,687.8 C1238.8,689.4 1239.6,692.8 1240.0,694.0 C1240.4,695.2 1240.0,695.0 1240.0,695.2" stroke="#20b8b0"/>
<path d="M1482.5,584.0 C1483.3,585.0 1485.4,588.4 1487.5,590.2 C1489.6,592.1 1492.3,593.6 1495.0,595.2 C1497.7,596.9 1501.7,598.4 1503.8,600.2 C1505.8,602.1 1507.1,604.0 1507.5,606.5 C1507.9,609.0 1507.3,612.1 1506.2,615.2 C1505.2,618.4 1503.1,622.3 1501.2,625.2 C1499.4,628.2 1497.3,630.5 1495.0,632.8 C1492.7,635.0 1490.0,636.9 1487.5,639.0 C1485.0,641.1 1481.8,644.1 1480.0,645.2 C1478.2,646.4 1477.4,645.8 1476.9,645.9" stroke="#2c62be"/>
<path d="M1470.0,584.0 C1471.2,584.8 1474.6,587.3 1477.5,589.0 C1480.4,590.7 1484.4,592.1 1487.5,594.0 C1490.6,595.9 1494.0,598.0 1496.2,600.2 C1498.5,602.5 1500.2,605.0 1501.2,607.8 C1502.3,610.5 1502.9,613.6 1502.5,616.5 C1502.1,619.4 1500.4,622.5 1498.8,625.2 C1497.1,628.0 1494.6,630.7 1492.5,632.8 C1490.4,634.8 1488.3,636.3 1486.2,637.8 C1484.2,639.2 1481.0,640.9 1480.0,641.5" stroke="#289ed0"/>
<path d="M1447.5,589.0 C1448.8,588.9 1451.7,588.2 1455.0,588.4 C1458.3,588.6 1463.8,589.3 1467.5,590.2 C1471.2,591.2 1473.8,592.5 1477.5,594.0 C1481.2,595.5 1486.7,597.1 1490.0,599.0 C1493.3,600.9 1495.8,602.8 1497.5,605.2 C1499.2,607.8 1500.0,611.1 1500.0,614.0 C1500.0,616.9 1499.0,620.0 1497.5,622.8 C1496.0,625.5 1493.3,628.2 1491.2,630.2 C1489.2,632.3 1487.1,633.8 1485.0,635.2 C1482.9,636.7 1479.8,638.4 1478.8,639.0" stroke="#20b8b0"/>
<path d="M1466.2,596.5 C1467.7,596.7 1471.9,596.9 1475.0,597.8 C1478.1,598.6 1482.1,599.6 1485.0,601.5 C1487.9,603.4 1490.8,606.5 1492.5,609.0 C1494.2,611.5 1495.0,614.0 1495.0,616.5 C1495.0,619.0 1494.0,621.7 1492.5,624.0 C1491.0,626.3 1488.3,628.4 1486.2,630.2 C1484.2,632.1 1482.3,633.6 1480.0,635.2 C1477.7,636.9 1474.8,638.7 1472.5,640.2 C1470.2,641.8 1467.3,643.9 1466.2,644.6" stroke="#3abe56"/>
<path d="M1455.0,640.2 C1455.2,639.0 1455.2,634.8 1456.2,632.8 C1457.3,630.7 1458.1,628.8 1461.2,627.8 C1464.4,626.7 1471.0,627.3 1475.0,626.5 C1479.0,625.7 1482.7,624.4 1485.0,622.8 C1487.3,621.1 1488.5,618.4 1488.8,616.5 C1489.0,614.6 1488.1,613.2 1486.2,611.5 C1484.4,609.8 1480.2,607.8 1477.5,606.5 C1474.8,605.2 1472.7,604.0 1470.0,604.0 C1467.3,604.0 1463.5,605.2 1461.2,606.5 C1459.0,607.8 1457.5,609.4 1456.2,611.5 C1455.0,613.6 1455.0,617.1 1453.8,619.0 C1452.5,620.9 1451.5,621.5 1448.8,622.8 C1446.0,624.0 1441.5,625.5 1437.5,626.5 C1433.5,627.5 1428.1,627.8 1425.0,629.0 C1421.9,630.2 1420.2,631.9 1418.8,634.0 C1417.3,636.1 1416.0,639.2 1416.2,641.5 C1416.5,643.8 1417.7,646.4 1420.0,647.8 C1422.3,649.1 1425.6,649.4 1430.0,649.6 C1434.4,649.9 1443.5,649.3 1446.2,649.2" stroke="#94cc20"/>
<path d="M1380.0,655.9 C1382.1,655.2 1388.3,653.3 1392.5,652.1 C1396.7,651.0 1402.3,651.0 1405.0,649.0 C1407.7,647.0 1406.7,643.2 1408.8,640.2 C1410.8,637.3 1414.0,634.4 1417.5,631.5 C1421.0,628.6 1425.8,625.5 1430.0,622.8 C1434.2,620.0 1439.0,618.0 1442.5,615.2 C1446.0,612.5 1448.8,609.2 1451.2,606.5 C1453.8,603.8 1455.0,600.7 1457.5,599.0 C1460.0,597.3 1464.8,596.9 1466.2,596.5" stroke="#3abe56"/>
<path d="M1380.0,645.2 C1381.0,644.8 1385.2,644.2 1386.2,642.8 C1387.3,641.3 1384.8,638.2 1386.2,636.5 C1387.7,634.8 1391.9,634.4 1395.0,632.8 C1398.1,631.1 1401.2,628.6 1405.0,626.5 C1408.8,624.4 1413.8,622.1 1417.5,620.2 C1421.2,618.4 1424.4,617.5 1427.5,615.2 C1430.6,613.0 1434.0,609.0 1436.2,606.5 C1438.5,604.0 1440.0,602.8 1441.2,600.2 C1442.5,597.8 1442.7,593.4 1443.8,591.5 C1444.8,589.6 1446.9,589.4 1447.5,589.0" stroke="#20b8b0"/>
<path d="M1380.0,679.0 C1381.9,679.2 1387.5,680.5 1391.2,680.2 C1395.0,680.0 1399.9,679.4 1402.5,677.8 C1405.1,676.1 1406.0,673.4 1406.9,670.2 C1407.7,667.1 1406.6,661.5 1407.5,659.0 C1408.4,656.5 1409.2,655.9 1412.5,655.2 C1415.8,654.6 1422.9,655.0 1427.5,655.2 C1432.1,655.5 1436.9,656.0 1440.0,656.5 C1443.1,657.0 1445.2,658.1 1446.2,658.4" stroke="#3abe56"/>
<path d="M1446.2,659.0 C1444.0,659.1 1437.1,659.5 1432.5,659.6 C1427.9,659.7 1421.9,658.9 1418.8,659.6 C1415.6,660.4 1414.8,661.6 1413.8,664.0 C1412.7,666.4 1412.9,671.1 1412.5,674.0 C1412.1,676.9 1413.1,679.8 1411.2,681.5 C1409.4,683.2 1404.8,683.4 1401.2,684.0 C1397.7,684.6 1393.5,685.0 1390.0,685.2 C1386.5,685.5 1381.7,685.2 1380.0,685.2" stroke="#20b8b0"/>
<ellipse cx="1391.9" cy="667.1" rx="1.9" ry="2.2" stroke="#94cc20"/>
<path d="M1446.2,667.1 C1444.6,666.9 1439.6,666.0 1436.2,665.9 C1432.9,665.8 1428.5,665.6 1426.2,666.5 C1424.0,667.4 1422.7,670.0 1422.5,671.5 C1422.3,673.0 1423.3,674.0 1425.0,675.2 C1426.7,676.5 1430.2,677.3 1432.5,679.0 C1434.8,680.7 1437.3,682.8 1438.8,685.2 C1440.2,687.8 1441.2,690.9 1441.2,694.0 C1441.2,697.1 1439.6,700.8 1438.8,704.0 C1437.9,707.2 1436.7,711.5 1436.2,713.0" stroke="#289ed0"/>
<path d="M1380.0,690.2 C1381.7,689.8 1386.5,688.1 1390.0,687.8 C1393.5,687.4 1397.7,687.3 1401.2,688.4 C1404.8,689.4 1408.5,691.6 1411.2,694.0 C1414.0,696.4 1415.6,699.6 1417.5,702.8 C1419.4,705.9 1421.7,711.3 1422.5,713.0" stroke="#289ed0"/>
<ellipse cx="1396.2" cy="704.0" rx="13.8" ry="11.2" stroke="#2c62be"/>
<ellipse cx="1395.6" cy="705.2" rx="7.2" ry="6.5" stroke="#a838c0"/>
<path d="M1416.2,684.0 C1416.9,684.0 1418.5,683.4 1420.0,684.0 C1421.5,684.6 1424.0,686.4 1425.0,687.8 C1426.0,689.1 1426.7,691.2 1426.2,692.1 C1425.8,693.1 1424.0,693.7 1422.5,693.4 C1421.0,693.1 1418.6,691.5 1417.5,690.2 C1416.4,689.0 1415.9,686.6 1415.6,685.9" stroke="#20b8b0"/>
<path d="M1512.5,612.8 C1511.2,614.2 1507.5,618.0 1505.0,621.5 C1502.5,625.0 1500.0,630.2 1497.5,634.0 C1495.0,637.8 1491.2,641.3 1490.0,644.0 C1488.8,646.7 1488.3,648.8 1490.0,650.2 C1491.7,651.7 1496.7,652.4 1500.0,652.8 C1503.3,653.1 1507.1,653.2 1510.0,652.1 C1512.9,651.1 1515.2,649.1 1517.5,646.5 C1519.8,643.9 1522.1,640.0 1523.8,636.5 C1525.4,633.0 1527.1,628.2 1527.5,625.2 C1527.9,622.3 1527.5,620.9 1526.2,619.0 C1525.0,617.1 1522.3,615.0 1520.0,614.0 C1517.7,613.0 1513.8,613.0 1512.5,612.8" stroke="#a838c0"/>
<path d="M1565.0,594.6 C1563.8,595.1 1559.0,596.0 1557.5,597.8 C1556.0,599.5 1555.8,602.8 1556.2,605.2 C1556.7,607.8 1558.1,611.0 1560.0,612.8 C1561.9,614.5 1565.2,615.9 1567.5,615.9 C1569.8,615.9 1572.5,614.7 1573.8,612.8 C1575.0,610.8 1575.4,606.5 1575.0,604.0 C1574.6,601.5 1572.9,599.3 1571.2,597.8 C1569.6,596.2 1566.0,595.1 1565.0,594.6" stroke="#a838c0"/>
<path d="M1562.5,584.0 C1564.0,585.0 1568.3,588.0 1571.2,590.2 C1574.2,592.5 1577.7,595.0 1580.0,597.8 C1582.3,600.5 1584.2,603.6 1585.0,606.5 C1585.8,609.4 1586.0,613.0 1585.0,615.2 C1584.0,617.5 1582.3,618.3 1578.8,620.2 C1575.2,622.2 1568.1,626.5 1563.8,627.1 C1559.4,627.8 1555.6,625.8 1552.5,624.0 C1549.4,622.2 1546.7,619.4 1545.0,616.5 C1543.3,613.6 1543.5,609.4 1542.5,606.5 C1541.5,603.6 1540.2,600.5 1538.8,599.0 C1537.3,597.5 1536.2,597.5 1533.8,597.8 C1531.2,598.0 1525.4,599.2 1523.8,600.2 C1522.1,601.3 1522.7,602.5 1523.8,604.0 C1524.8,605.5 1528.1,607.1 1530.0,609.0 C1531.9,610.9 1534.2,612.8 1535.0,615.2 C1535.8,617.8 1535.6,620.9 1535.0,624.0 C1534.4,627.1 1533.1,630.5 1531.2,634.0 C1529.4,637.5 1526.2,641.5 1523.8,645.2 C1521.2,649.0 1519.4,654.2 1516.2,656.5 C1513.1,658.8 1509.0,658.4 1505.0,659.0 C1501.0,659.6 1495.4,659.4 1492.5,660.2 C1489.6,661.1 1489.2,661.9 1487.5,664.0 C1485.8,666.1 1483.3,671.3 1482.5,672.8" stroke="#2c62be"/>
<path d="M1573.8,584.0 C1574.8,585.0 1576.9,588.2 1580.0,590.2 C1583.1,592.3 1589.6,595.0 1592.5,596.5 C1595.4,598.0 1595.0,599.2 1597.5,599.0 C1600.0,598.8 1603.8,596.2 1607.5,595.2 C1611.2,594.3 1617.9,593.7 1620.0,593.4" stroke="#289ed0"/>
<path d="M1595.0,615.9 C1593.3,616.6 1588.8,618.1 1585.0,620.2 C1581.2,622.4 1576.9,626.3 1572.5,629.0 C1568.1,631.7 1562.1,635.9 1558.8,636.5 C1555.4,637.1 1555.2,633.6 1552.5,632.8 C1549.8,631.9 1545.6,630.5 1542.5,631.5 C1539.4,632.5 1536.2,635.9 1533.8,639.0 C1531.2,642.1 1530.0,646.9 1527.5,650.2 C1525.0,653.6 1522.5,656.9 1518.8,659.0 C1515.0,661.1 1509.4,661.7 1505.0,662.8 C1500.6,663.8 1495.4,663.6 1492.5,665.2 C1489.6,666.9 1488.5,670.9 1487.5,672.8 C1486.5,674.6 1486.5,675.9 1486.2,676.5" stroke="#289ed0"/>
<path d="M1590.6,627.1 C1588.9,627.9 1583.4,629.5 1580.0,631.5 C1576.6,633.5 1573.5,636.6 1570.0,639.0 C1566.5,641.4 1562.1,645.2 1558.8,645.9 C1555.4,646.5 1552.7,643.5 1550.0,642.8 C1547.3,642.0 1545.0,640.7 1542.5,641.5 C1540.0,642.3 1537.3,645.0 1535.0,647.8 C1532.7,650.5 1531.7,655.0 1528.8,657.8 C1525.8,660.5 1521.9,662.5 1517.5,664.0 C1513.1,665.5 1506.7,665.2 1502.5,666.5 C1498.3,667.8 1494.8,669.4 1492.5,671.5 C1490.2,673.6 1489.6,677.3 1488.8,679.0 C1487.9,680.7 1487.7,681.1 1487.5,681.5" stroke="#20b8b0"/>
<path d="M1584.4,639.0 C1583.2,639.6 1580.1,640.9 1577.5,642.8 C1574.9,644.6 1571.9,648.1 1568.8,650.2 C1565.6,652.4 1562.1,655.7 1558.8,655.9 C1555.4,656.1 1551.7,652.2 1548.8,651.5 C1545.8,650.8 1543.5,650.0 1541.2,651.5 C1539.0,653.0 1537.7,657.8 1535.0,660.2 C1532.3,662.8 1529.2,664.8 1525.0,666.5 C1520.8,668.2 1514.2,669.0 1510.0,670.2 C1505.8,671.5 1502.5,672.1 1500.0,674.0 C1497.5,675.9 1495.9,678.8 1495.0,681.5 C1494.1,684.2 1494.5,688.8 1494.4,690.2" stroke="#3abe56"/>
<path d="M1591.2,659.0 C1590.6,659.8 1589.4,662.8 1587.5,664.0 C1585.6,665.2 1582.9,666.1 1580.0,666.5 C1577.1,666.9 1573.5,666.4 1570.0,666.5 C1566.5,666.6 1561.7,666.3 1558.8,667.1 C1555.8,668.0 1553.9,669.8 1552.5,671.5 C1551.1,673.2 1550.9,676.2 1550.6,677.1" stroke="#94cc20"/>
<path d="M1540.0,681.5 C1539.8,679.8 1539.6,673.5 1538.8,671.5 C1537.9,669.5 1536.9,669.6 1535.0,669.6 C1533.1,669.6 1530.4,670.8 1527.5,671.5 C1524.6,672.2 1520.6,672.8 1517.5,674.0 C1514.4,675.2 1510.6,677.3 1508.8,679.0 C1506.9,680.7 1506.2,681.9 1506.2,684.0 C1506.2,686.1 1508.2,689.6 1508.8,691.5 C1509.3,693.4 1509.3,694.6 1509.4,695.2" stroke="#94cc20"/>
<ellipse cx="1522.5" cy="683.4" rx="5.0" ry="2.8" stroke="#dccc1c"/>
<path d="M1607.5,662.8 C1605.4,663.6 1599.2,666.3 1595.0,667.8 C1590.8,669.2 1587.1,670.6 1582.5,671.5 C1577.9,672.4 1570.2,672.9 1567.5,673.4 C1564.8,673.9 1566.5,674.4 1566.2,674.6" stroke="#20b8b0"/>
<path d="M1571.9,677.1 C1573.2,677.0 1576.6,676.4 1580.0,676.5 C1583.4,676.6 1589.2,677.1 1592.5,677.8 C1595.8,678.4 1598.8,679.8 1600.0,680.2" stroke="#289ed0"/>
<path d="M1573.8,680.2 C1575.6,680.7 1581.0,681.9 1585.0,682.8 C1589.0,683.6 1595.4,684.8 1597.5,685.2" stroke="#2c62be"/>
<path d="M1573.8,684.0 C1575.0,684.6 1578.1,686.3 1581.2,687.8 C1584.4,689.2 1588.8,691.1 1592.5,692.8 C1596.2,694.4 1600.8,696.4 1603.8,697.8 C1606.7,699.1 1609.0,700.4 1610.0,700.9" stroke="#a838c0"/>
<path d="M1396.2,584.0 C1396.0,585.7 1396.5,591.1 1395.0,594.0 C1393.5,596.9 1389.6,599.0 1387.5,601.5 C1385.4,604.0 1383.8,606.7 1382.5,609.0 C1381.2,611.3 1380.4,614.2 1380.0,615.2" stroke="#3abe56"/>
<path d="M1410.0,587.8 C1411.0,588.2 1415.0,588.8 1416.2,590.2 C1417.5,591.7 1418.3,594.2 1417.5,596.5 C1416.7,598.8 1413.5,601.5 1411.2,604.0 C1409.0,606.5 1406.2,609.0 1403.8,611.5 C1401.2,614.0 1398.5,616.9 1396.2,619.0 C1394.0,621.1 1392.3,623.0 1390.0,624.0 C1387.7,625.0 1384.2,625.2 1382.5,625.2 C1380.8,625.2 1380.4,624.2 1380.0,624.0" stroke="#3abe56"/>
<ellipse cx="1382.5" cy="614.0" rx="1.9" ry="1.9" stroke="#289ed0"/>
<ellipse cx="1388.1" cy="604.0" rx="1.5" ry="1.5" stroke="#3abe56"/>
<ellipse cx="1405.6" cy="616.5" rx="3.8" ry="3.8" stroke="#2c62be"/>
<path d="M1433.8,584.0 C1434.0,585.2 1434.0,590.2 1435.0,591.5 C1436.0,592.8 1438.8,592.1 1440.0,591.5 C1441.2,590.9 1441.7,589.0 1442.5,587.8 C1443.3,586.5 1444.6,584.6 1445.0,584.0" stroke="#20b8b0"/>
<path d="M1427.5,594.0 C1427.7,594.8 1429.6,597.9 1428.8,599.0 C1427.9,600.1 1424.2,600.2 1422.5,600.9 C1420.8,601.5 1420.6,601.4 1418.8,602.8 C1416.9,604.1 1414.0,606.3 1411.2,609.0 C1408.5,611.7 1405.0,616.1 1402.5,619.0 C1400.0,621.9 1398.3,624.6 1396.2,626.5 C1394.2,628.4 1391.9,629.4 1390.0,630.2 C1388.1,631.1 1385.8,631.3 1385.0,631.5" stroke="#20b8b0"/>
<path d="M1381.0,689.0 C1380.0,690.2 1376.2,693.7 1375.0,696.0 C1373.8,698.3 1373.7,700.8 1373.5,703.0 C1373.3,705.2 1373.9,708.0 1374.0,709.0" stroke="#289ed0"/>
<path d="M1310.8,658.7 C1311.2,657.9 1311.8,655.8 1313.0,654.0 C1314.2,652.2 1316.0,649.3 1318.0,648.0 C1320.0,646.7 1323.8,646.3 1325.0,646.0" stroke="#20b8b0"/>
<path d="M988.7,586.7 L997.2,586.7 L997.2,582.8 L1008.8,578.9 L1012.0,578.5 L1012.0,577.8 L1044.5,576.6 L1046.0,573.5 L1050.7,571.9 L1051.5,552.6 L1053.8,554.9 L1055.3,558.0 L1060.0,558.0" stroke="#2c62be"/>
<path d="M1546.7,578.5 C1547.5,579.1 1550.1,581.0 1551.9,581.7 C1553.6,582.4 1555.2,582.0 1557.1,582.7 C1559.0,583.4 1561.6,584.8 1563.3,585.8 C1565.1,586.9 1566.8,588.4 1567.5,589.0" stroke="#2c62be"/>
</g>
<g clip-path="url(#cp0)">
<path d="M1200.0,556.2 C1201.4,556.6 1205.7,557.6 1208.3,558.3 C1210.9,559.1 1212.7,560.7 1215.6,560.9 C1218.6,561.2 1223.1,560.9 1226.0,559.9 C1229.0,558.9 1231.4,556.9 1233.3,555.2 C1235.2,553.6 1236.8,550.9 1237.5,550.0" stroke="#a838c0"/>
<path d="M1285.4,550.0 C1286.1,550.3 1288.0,551.5 1289.6,551.6 C1291.1,551.6 1293.9,550.7 1294.8,550.5" stroke="#2c62be"/>
<path d="M1200.0,571.9 C1201.4,572.2 1205.6,573.4 1208.3,574.0 C1211.1,574.5 1214.2,575.2 1216.7,575.0 C1219.1,574.8 1220.5,574.1 1222.9,572.9 C1225.3,571.7 1228.5,569.8 1231.2,567.7 C1234.0,565.6 1237.0,563.0 1239.6,560.4 C1242.2,557.8 1245.3,553.8 1246.9,552.1 C1248.4,550.3 1248.6,550.3 1249.0,550.0" stroke="#2c62be"/>
<path d="M1200.0,633.3 C1201.4,631.9 1205.6,628.1 1208.3,625.0 C1211.1,621.9 1214.2,618.1 1216.7,614.6 C1219.1,611.1 1221.4,607.6 1222.9,604.2 C1224.5,600.7 1225.5,597.4 1226.0,593.8 C1226.6,590.1 1225.3,585.8 1226.0,582.3 C1226.7,578.8 1228.0,576.2 1230.2,572.9 C1232.5,569.6 1235.9,565.3 1239.6,562.5 C1243.2,559.7 1248.6,557.1 1252.1,556.2 C1255.6,555.4 1256.9,556.4 1260.4,557.3 C1263.9,558.2 1268.8,560.6 1272.9,561.5 C1277.1,562.3 1281.1,562.8 1285.4,562.5 C1289.8,562.2 1295.0,560.9 1299.0,559.4 C1303.0,557.8 1306.8,554.7 1309.4,553.1 C1312.0,551.6 1313.7,550.5 1314.6,550.0" stroke="#289ed0"/>
<path d="M1200.0,647.9 C1201.7,645.8 1206.9,639.6 1210.4,635.4 C1213.9,631.2 1217.9,626.7 1220.8,622.9 C1223.8,619.1 1226.0,616.8 1228.1,612.5 C1230.2,608.2 1232.3,602.3 1233.3,596.9 C1234.4,591.5 1233.3,584.5 1234.4,580.2 C1235.4,575.9 1237.2,573.3 1239.6,570.8 C1242.0,568.4 1245.8,566.3 1249.0,565.6 C1252.1,564.9 1254.3,566.0 1258.3,566.7 C1262.3,567.4 1267.9,569.1 1272.9,569.8 C1278.0,570.5 1283.7,571.0 1288.5,570.8 C1293.4,570.7 1297.7,569.8 1302.1,568.8 C1306.4,567.7 1310.8,566.0 1314.6,564.6 C1318.4,563.2 1320.7,561.8 1325.0,560.4 C1329.3,559.0 1335.4,557.5 1340.6,556.2 C1345.8,555.0 1350.2,554.2 1356.2,553.1 C1362.3,552.1 1373.6,550.5 1377.1,550.0" stroke="#20b8b0"/>
<path d="M1209.4,657.0 C1210.8,654.3 1214.6,645.6 1217.7,640.6 C1220.8,635.6 1224.7,631.8 1228.1,627.1 C1231.6,622.4 1236.1,617.0 1238.5,612.5 C1241.0,608.0 1241.8,605.2 1242.7,600.0 C1243.6,594.8 1243.2,585.1 1243.8,581.2 C1244.3,577.4 1242.7,577.8 1245.8,577.1 C1249.0,576.4 1258.0,576.6 1262.5,577.1 C1267.0,577.6 1269.4,579.3 1272.9,580.2 C1276.4,581.1 1279.9,581.4 1283.3,582.3 C1286.8,583.2 1291.0,584.2 1293.8,585.4 C1296.5,586.6 1298.3,588.2 1300.0,589.6 C1301.7,591.0 1302.8,592.2 1304.2,593.8 C1305.6,595.3 1306.6,598.6 1308.3,599.0 C1310.1,599.3 1312.8,597.4 1314.6,595.8 C1316.3,594.3 1318.2,592.0 1318.8,589.6 C1319.3,587.2 1317.4,583.5 1317.7,581.2 C1318.1,579.0 1319.6,578.0 1320.8,576.0 C1322.0,574.1 1322.6,571.7 1325.0,569.8 C1327.4,567.9 1331.9,566.0 1335.4,564.6 C1338.9,563.2 1341.5,562.5 1345.8,561.5 C1350.2,560.4 1356.6,559.5 1361.5,558.3 C1366.3,557.1 1371.4,555.6 1375.0,554.2 C1378.6,552.8 1381.9,550.7 1383.3,550.0" stroke="#3abe56"/>
<path d="M1220.8,657.0 C1221.0,654.8 1220.5,649.4 1221.9,643.8 C1223.3,638.1 1226.2,628.5 1229.2,622.9 C1232.1,617.4 1235.8,613.4 1239.6,610.4 C1243.4,607.5 1248.3,606.6 1252.1,605.2 C1255.9,603.8 1259.0,603.5 1262.5,602.1 C1266.0,600.7 1269.4,598.1 1272.9,596.9 C1276.4,595.7 1279.9,595.0 1283.3,594.8 C1286.8,594.6 1290.8,595.1 1293.8,595.8 C1296.7,596.5 1299.3,597.9 1301.0,599.0 C1302.8,600.0 1303.6,601.6 1304.2,602.1" stroke="#94cc20"/>
<path d="M1243.8,621.9 C1244.4,620.8 1245.5,617.0 1247.9,615.6 C1250.3,614.2 1254.5,614.4 1258.3,613.5 C1262.2,612.7 1267.0,611.6 1270.8,610.4 C1274.7,609.2 1279.0,606.6 1281.2,606.2 C1283.5,605.9 1284.7,606.9 1284.4,608.3 C1284.0,609.7 1281.9,612.2 1279.2,614.6 C1276.4,617.0 1271.2,620.3 1267.7,622.9 C1264.2,625.5 1261.3,629.2 1258.3,630.2 C1255.4,631.2 1252.4,630.0 1250.0,629.2 C1247.6,628.3 1244.8,626.2 1243.8,625.0 C1242.7,623.8 1243.8,622.4 1243.8,621.9" stroke="#dccc1c"/>
<path d="M1250.0,645.8 C1251.0,645.1 1254.2,643.4 1256.2,641.7 C1258.3,639.9 1260.9,637.2 1262.5,635.4 C1264.1,633.7 1264.9,631.1 1265.6,631.2 C1266.3,631.4 1267.2,634.5 1266.7,636.5 C1266.1,638.4 1264.2,641.1 1262.5,642.7 C1260.8,644.3 1258.0,645.1 1256.2,645.8 C1254.5,646.5 1253.1,646.9 1252.1,646.9 C1251.0,646.9 1250.3,646.0 1250.0,645.8" stroke="#dccc1c"/>
<path d="M1233.3,657.0 C1234.7,655.6 1239.1,651.0 1241.7,649.0 C1244.3,646.9 1246.9,646.4 1249.0,644.8 C1251.0,643.2 1251.9,641.7 1254.2,639.6 C1256.4,637.5 1259.4,634.4 1262.5,632.3 C1265.6,630.2 1269.4,628.6 1272.9,627.1 C1276.4,625.5 1279.9,624.3 1283.3,622.9 C1286.8,621.5 1290.3,620.0 1293.8,618.8 C1297.2,617.5 1300.7,616.7 1304.2,615.6 C1307.6,614.6 1312.8,613.0 1314.6,612.5" stroke="#94cc20"/>
<path d="M1289.6,635.4 C1290.3,634.0 1292.0,629.2 1293.8,627.1 C1295.5,625.0 1297.4,624.7 1300.0,622.9 C1302.6,621.2 1306.6,618.1 1309.4,616.7 C1312.2,615.3 1315.1,614.6 1316.7,614.6 C1318.2,614.6 1320.0,615.6 1318.8,616.7 C1317.5,617.7 1311.8,619.1 1309.4,620.8 C1306.9,622.6 1305.2,625.0 1304.2,627.1 C1303.1,629.2 1303.8,631.9 1303.1,633.3 C1302.4,634.7 1301.6,635.1 1300.0,635.4 C1298.4,635.8 1294.8,635.4 1293.8,635.4" stroke="#3abe56"/>
<ellipse cx="1300.0" cy="641.7" rx="8.9" ry="4.4" stroke="#dccc1c"/>
<ellipse cx="1300.0" cy="641.7" rx="10.4" ry="6.0" stroke="#94cc20"/>
<ellipse cx="1301.0" cy="644.3" rx="0.3" ry="0.4" stroke="#d44422"/>
<path d="M1272.9,647.9 C1273.6,646.9 1275.3,643.1 1277.1,641.7 C1278.8,640.3 1281.8,639.6 1283.3,639.6 C1284.9,639.6 1285.9,640.6 1286.5,641.7 C1287.0,642.7 1287.3,645.5 1286.5,645.8 C1285.6,646.2 1282.8,643.8 1281.2,643.8 C1279.7,643.8 1277.8,645.5 1277.1,645.8" stroke="#3abe56"/>
<path d="M1317.7,602.1 C1318.6,601.7 1320.8,600.3 1322.9,600.0 C1325.0,599.7 1328.1,600.2 1330.2,600.0 C1332.3,599.8 1332.8,599.0 1335.4,599.0 C1338.0,599.0 1342.4,599.9 1345.8,600.0 C1349.3,600.1 1354.3,598.4 1356.2,599.5 C1358.2,600.5 1357.6,604.1 1357.3,606.2 C1356.9,608.4 1355.7,610.8 1354.2,612.5 C1352.6,614.2 1349.7,615.3 1347.9,616.7 C1346.2,618.1 1343.8,619.1 1343.8,620.8 C1343.8,622.6 1346.2,625.0 1347.9,627.1 C1349.7,629.2 1352.4,632.6 1354.2,633.3 C1355.9,634.0 1357.3,633.0 1358.3,631.2 C1359.4,629.5 1360.2,625.7 1360.4,622.9 C1360.6,620.1 1360.2,615.5 1359.4,614.6 C1358.5,613.7 1356.2,616.3 1355.2,617.7 C1354.2,619.1 1353.5,622.0 1353.1,622.9" stroke="#94cc20"/>
<path d="M1322.9,614.6 C1323.6,613.9 1325.7,610.8 1327.1,610.4 C1328.5,610.1 1330.2,611.3 1331.2,612.5 C1332.3,613.7 1332.6,616.0 1333.3,617.7 C1334.0,619.4 1335.6,621.7 1335.4,622.9 C1335.2,624.1 1333.7,625.0 1332.3,625.0 C1330.9,625.0 1328.5,624.0 1327.1,622.9 C1325.7,621.9 1324.7,620.1 1324.0,618.8 C1323.3,617.4 1323.1,615.3 1322.9,614.6" stroke="#20b8b0"/>
<ellipse cx="1329.2" cy="635.4" rx="3.6" ry="4.7" stroke="#2c62be"/>
<path d="M1312.5,642.7 C1313.7,641.7 1317.0,638.5 1319.8,636.5 C1322.6,634.4 1326.0,631.6 1329.2,630.2 C1332.3,628.8 1335.4,628.1 1338.5,628.1 C1341.7,628.1 1345.8,628.8 1347.9,630.2 C1350.0,631.6 1351.0,634.2 1351.0,636.5 C1351.0,638.7 1349.7,642.0 1347.9,643.8 C1346.2,645.5 1342.7,646.7 1340.6,646.9 C1338.5,647.0 1337.0,645.0 1335.4,644.8 C1333.9,644.6 1331.6,644.3 1331.2,645.8 C1330.9,647.4 1332.6,652.3 1333.3,654.2 C1334.0,656.0 1335.1,656.5 1335.4,657.0" stroke="#20b8b0"/>
<path d="M1343.8,631.2 C1344.1,631.6 1345.7,632.3 1345.8,633.3 C1346.0,634.4 1345.2,637.0 1344.8,637.5 C1344.4,638.0 1343.4,637.5 1343.2,636.5 C1343.1,635.4 1343.7,632.1 1343.8,631.2" stroke="#2c62be"/>
<ellipse cx="1338.5" cy="635.4" rx="1.9" ry="1.9" stroke="#20b8b0"/>
<path d="M1370.8,628.1 C1371.9,627.6 1374.3,625.3 1377.1,625.0 C1379.9,624.7 1384.4,625.7 1387.5,626.0 C1390.6,626.4 1394.1,625.9 1395.8,627.1 C1397.6,628.3 1398.4,631.8 1397.9,633.3 C1397.4,634.9 1394.4,635.6 1392.7,636.5 C1391.0,637.3 1389.1,637.7 1387.5,638.5 C1385.9,639.4 1384.7,640.8 1383.3,641.7 C1381.9,642.5 1380.6,643.9 1379.2,643.8 C1377.8,643.6 1376.2,642.4 1375.0,640.6 C1373.8,638.9 1372.6,635.4 1371.9,633.3 C1371.2,631.2 1371.0,629.0 1370.8,628.1" stroke="#20b8b0"/>
<path d="M1366.7,622.9 C1368.4,622.6 1373.6,620.8 1377.1,620.8 C1380.6,620.8 1384.4,622.9 1387.5,622.9 C1390.6,622.9 1393.8,621.5 1395.8,620.8 C1397.9,620.1 1399.3,619.1 1400.0,618.8" stroke="#3abe56"/>
<path d="M1400.0,584.4 C1399.0,585.2 1396.2,587.0 1393.8,589.6 C1391.3,592.2 1387.8,596.9 1385.4,600.0 C1383.0,603.1 1380.6,606.2 1379.2,608.3 C1377.8,610.4 1377.1,611.1 1377.1,612.5 C1377.1,613.9 1377.4,615.8 1379.2,616.7 C1380.9,617.5 1385.1,618.4 1387.5,617.7 C1389.9,617.0 1392.0,614.1 1393.8,612.5 C1395.5,610.9 1396.9,609.4 1397.9,608.3 C1399.0,607.3 1399.7,606.6 1400.0,606.2" stroke="#3abe56"/>
<ellipse cx="1383.3" cy="612.5" rx="2.3" ry="2.3" stroke="#289ed0"/>
<ellipse cx="1383.3" cy="612.5" rx="1.0" ry="1.0" stroke="#289ed0"/>
<path d="M1334.4,589.6 C1334.5,589.1 1333.5,587.2 1335.4,586.5 C1337.3,585.8 1342.4,585.8 1345.8,585.4 C1349.3,585.1 1353.6,584.2 1356.2,584.4 C1358.9,584.5 1360.6,585.4 1361.5,586.5 C1362.3,587.5 1362.7,589.8 1361.5,590.6 C1360.2,591.5 1356.4,591.7 1354.2,591.7 C1351.9,591.7 1350.2,590.3 1347.9,590.6 C1345.7,591.0 1342.7,593.2 1340.6,593.8 C1338.5,594.3 1336.5,594.4 1335.4,593.8 C1334.4,593.1 1334.5,590.3 1334.4,589.6" stroke="#dccc1c"/>
<path d="M1340.6,570.8 C1341.5,570.5 1343.6,568.9 1345.8,568.8 C1348.1,568.6 1352.4,568.9 1354.2,569.8 C1355.9,570.7 1356.2,572.7 1356.2,574.0 C1356.2,575.2 1355.9,576.6 1354.2,577.1 C1352.4,577.6 1347.6,577.8 1345.8,577.1 C1344.1,576.4 1344.1,573.6 1343.8,572.9" stroke="#3abe56"/>
<path d="M1371.9,574.0 C1372.7,573.1 1374.8,569.8 1377.1,568.8 C1379.3,567.7 1383.0,568.1 1385.4,567.7 C1387.8,567.4 1389.6,566.1 1391.7,566.7 C1393.8,567.2 1397.2,569.1 1397.9,570.8 C1398.6,572.6 1397.6,575.3 1395.8,577.1 C1394.1,578.8 1389.8,580.9 1387.5,581.2 C1385.2,581.6 1384.0,580.2 1382.3,579.2 C1380.6,578.1 1378.8,575.9 1377.1,575.0 C1375.3,574.1 1372.7,574.1 1371.9,574.0" stroke="#94cc20"/>
<ellipse cx="1392.7" cy="570.3" rx="1.5" ry="1.5" stroke="#d44422"/>
<ellipse cx="1392.7" cy="570.3" rx="2.7" ry="2.7" stroke="#e49218"/>
<ellipse cx="1392.7" cy="570.3" rx="4.0" ry="4.0" stroke="#dccc1c"/>
<ellipse cx="1307.3" cy="587.0" rx="1.5" ry="1.5" stroke="#2c62be"/>
<ellipse cx="1307.3" cy="585.9" rx="3.3" ry="4.0" stroke="#289ed0"/>
<ellipse cx="1307.3" cy="585.9" rx="5.0" ry="5.7" stroke="#20b8b0"/>
<ellipse cx="1302.6" cy="574.0" rx="1.0" ry="1.0" stroke="#3abe56"/>
<ellipse cx="1307.8" cy="573.4" rx="1.9" ry="2.9" stroke="#20b8b0"/>
<ellipse cx="1317.2" cy="574.0" rx="0.8" ry="0.8" stroke="#20b8b0"/>
<ellipse cx="1331.8" cy="574.5" rx="1.0" ry="1.9" stroke="#3abe56"/>
<ellipse cx="1321.9" cy="578.6" rx="1.6" ry="1.6" stroke="#dccc1c"/>
<ellipse cx="1346.9" cy="579.7" rx="2.6" ry="1.9" stroke="#3abe56"/>
<ellipse cx="1359.9" cy="579.2" rx="2.9" ry="2.1" stroke="#94cc20"/>
<ellipse cx="1388.5" cy="580.2" rx="1.2" ry="1.2" stroke="#3abe56"/>
<ellipse cx="1381.2" cy="585.4" rx="3.6" ry="2.3" stroke="#20b8b0"/>
<ellipse cx="1374.0" cy="593.8" rx="1.0" ry="1.0" stroke="#3abe56"/>
<ellipse cx="1368.8" cy="600.0" rx="1.6" ry="4.2" stroke="#3abe56"/>
<ellipse cx="1388.0" cy="604.2" rx="1.6" ry="2.1" stroke="#20b8b0"/>
<ellipse cx="1320.8" cy="590.6" rx="2.6" ry="4.2" stroke="#dccc1c"/>
<ellipse cx="1304.2" cy="603.1" rx="3.1" ry="2.1" stroke="#dccc1c"/>
<ellipse cx="1312.5" cy="602.6" rx="1.0" ry="1.0" stroke="#3abe56"/>
<ellipse cx="1307.3" cy="607.3" rx="1.6" ry="1.6" stroke="#94cc20"/>
<ellipse cx="1313.5" cy="609.4" rx="4.2" ry="2.6" stroke="#dccc1c"/>
<ellipse cx="1297.9" cy="616.7" rx="2.6" ry="2.6" stroke="#e49218"/>
<ellipse cx="1273.4" cy="630.2" rx="1.6" ry="1.6" stroke="#dccc1c"/>
<ellipse cx="1297.9" cy="630.2" rx="1.6" ry="1.6" stroke="#20b8b0"/>
<ellipse cx="1320.3" cy="621.9" rx="2.1" ry="2.1" stroke="#94cc20"/>
<ellipse cx="1350.0" cy="607.8" rx="1.6" ry="1.6" stroke="#3abe56"/>
<ellipse cx="1344.8" cy="606.8" rx="0.6" ry="0.6" stroke="#20b8b0"/>
<ellipse cx="1326.6" cy="603.6" rx="0.8" ry="0.8" stroke="#3abe56"/>
<ellipse cx="1368.8" cy="636.5" rx="1.6" ry="1.6" stroke="#3abe56"/>
<ellipse cx="1334.9" cy="645.3" rx="1.6" ry="1.6" stroke="#3abe56"/>
<ellipse cx="1272.9" cy="649.0" rx="0.4" ry="0.4" stroke="#3abe56"/>
<path d="M1379.2,657.0 C1382.3,655.8 1394.4,651.3 1397.9,650.0 C1401.4,648.7 1399.7,649.1 1400.0,649.0" stroke="#94cc20"/>
<path d="M1293.8,650.0 C1294.6,649.8 1297.2,649.5 1299.0,649.0 C1300.7,648.4 1302.4,647.7 1304.2,646.9 C1305.9,646.0 1308.5,644.3 1309.4,643.8" stroke="#3abe56"/>
<path d="M1245.8,654.2 C1246.4,652.8 1247.9,646.0 1249.0,645.8 C1250.0,645.7 1251.6,651.9 1252.1,653.1" stroke="#3abe56"/>
<path d="M1356.2,657.0 C1359.7,656.2 1370.1,653.6 1377.1,652.1 C1384.0,650.6 1394.4,648.6 1397.9,647.9" stroke="#94cc20"/>
<path d="M1400.0,622.9 L1395.8,625.0" stroke="#20b8b0"/>
</g>
<g clip-path="url(#cp1)">
<path d="M1144.2,640.0 C1144.5,641.7 1145.7,646.9 1146.2,650.4 C1146.8,653.9 1147.5,657.7 1147.3,660.8 C1147.1,664.0 1146.4,667.5 1145.2,669.2 C1144.0,670.8 1140.9,670.5 1140.0,670.7" stroke="#2c62be"/>
<path d="M1162.9,640.0 C1162.2,641.0 1159.7,643.6 1158.8,646.2 C1157.8,648.9 1157.0,651.8 1157.2,655.6 C1157.4,659.4 1159.2,665.7 1159.8,669.2 C1160.4,672.6 1161.2,674.4 1160.8,676.5 C1160.5,678.5 1159.4,680.5 1157.7,681.7 C1156.0,682.9 1153.4,682.9 1150.4,683.8 C1147.5,684.6 1141.7,686.4 1140.0,686.9" stroke="#289ed0"/>
<path d="M1203.5,640.0 C1203.2,640.9 1202.7,643.3 1201.5,645.2 C1200.2,647.1 1198.0,650.1 1196.2,651.5 C1194.5,652.8 1192.3,652.5 1191.0,653.5 C1189.8,654.6 1190.2,657.5 1189.0,657.7 C1187.7,657.9 1183.9,656.1 1183.8,654.6 C1183.6,653.0 1187.9,649.7 1187.9,648.3 C1187.9,646.9 1185.8,647.2 1183.8,646.2 C1181.7,645.3 1177.5,643.0 1175.4,642.6 C1173.3,642.3 1172.5,642.9 1171.2,644.2 C1170.0,645.5 1168.8,646.8 1168.1,650.4 C1167.4,654.1 1167.6,661.2 1167.1,666.0 C1166.6,670.9 1165.3,675.2 1165.0,679.6 C1164.7,683.9 1165.7,689.0 1165.0,692.1 C1164.3,695.2 1161.7,695.7 1160.8,698.3 C1160.0,700.9 1159.6,704.4 1159.8,707.7 C1160.0,711.0 1160.0,715.2 1161.9,718.1 C1163.8,721.1 1166.6,722.8 1171.2,725.4 C1175.9,728.0 1184.8,733.1 1190.0,733.8 C1195.2,734.4 1196.9,731.5 1202.5,729.6 C1208.1,727.7 1217.3,724.2 1223.3,722.3 C1229.4,720.4 1235.5,719.2 1239.0,718.1 C1242.4,717.1 1243.3,716.4 1244.2,716.0" stroke="#20b8b0"/>
<ellipse cx="1187.9" cy="653.5" rx="1.6" ry="1.6" stroke="#2c62be"/>
<ellipse cx="1187.9" cy="653.5" rx="2.9" ry="2.9" stroke="#20b8b0"/>
<path d="M1211.9,640.0 C1211.5,641.7 1210.5,647.5 1209.8,650.4 C1209.1,653.4 1209.3,655.6 1207.7,657.7 C1206.1,659.8 1200.6,661.7 1200.4,662.9 C1200.2,664.1 1204.9,664.3 1206.7,665.0 C1208.4,665.7 1210.8,666.4 1210.8,667.1 C1210.8,667.8 1208.8,669.0 1206.7,669.2 C1204.6,669.3 1200.4,668.8 1198.3,668.1 C1196.2,667.4 1195.2,664.8 1194.2,665.0 C1193.1,665.2 1193.6,667.6 1192.1,669.2 C1190.5,670.7 1186.4,672.3 1184.8,674.4 C1183.2,676.5 1182.9,679.4 1182.7,681.7 C1182.5,683.9 1182.7,686.4 1183.8,687.9 C1184.8,689.5 1188.6,689.5 1189.0,691.0 C1189.3,692.6 1187.0,694.5 1185.8,697.3 C1184.6,700.1 1182.0,704.2 1181.7,707.7 C1181.3,711.2 1182.0,715.7 1183.8,718.1 C1185.5,720.6 1188.3,721.9 1192.1,722.3 C1195.9,722.6 1201.8,721.8 1206.7,720.2 C1211.5,718.6 1218.1,715.5 1221.2,712.9 C1224.4,710.3 1225.4,707.0 1225.4,704.6 C1225.4,702.2 1223.0,699.7 1221.2,698.3 C1219.5,696.9 1215.9,697.3 1215.0,696.2 C1214.1,695.2 1214.7,693.5 1216.0,692.1 C1217.4,690.7 1221.4,689.7 1223.3,687.9 C1225.2,686.2 1227.5,683.1 1227.5,681.7 C1227.5,680.3 1224.5,680.6 1223.3,679.6 C1222.1,678.5 1220.9,677.7 1220.2,675.4 C1219.5,673.2 1219.0,668.5 1219.2,666.0 C1219.3,663.6 1220.2,662.0 1221.2,660.8 C1222.3,659.6 1225.4,660.5 1225.4,658.8 C1225.4,657.0 1222.1,653.5 1221.2,650.4 C1220.4,647.3 1220.4,641.7 1220.2,640.0" stroke="#3abe56"/>
<path d="M1179.6,661.9 C1179.8,662.4 1181.1,663.6 1180.6,665.0 C1180.1,666.4 1177.3,668.1 1176.5,670.2 C1175.6,672.3 1175.1,675.9 1175.4,677.5 C1175.8,679.1 1177.3,680.1 1178.5,679.6 C1179.8,679.1 1181.3,675.4 1182.7,674.4 C1184.1,673.3 1184.8,673.9 1186.9,673.3 C1189.0,672.8 1192.6,671.2 1195.2,671.2 C1197.8,671.2 1200.4,673.2 1202.5,673.3 C1204.6,673.5 1206.7,669.5 1207.7,672.3 C1208.8,675.1 1208.1,686.7 1208.8,690.0 C1209.4,693.3 1211.9,691.6 1211.9,692.1 C1211.9,692.6 1210.1,693.3 1208.8,693.1 C1207.4,693.0 1204.6,690.7 1203.5,691.0 C1202.5,691.4 1201.8,693.5 1202.5,695.2 C1203.2,696.9 1207.7,699.5 1207.7,701.5 C1207.7,703.4 1204.1,706.1 1202.5,706.7 C1200.9,707.2 1199.9,706.0 1198.3,704.6 C1196.8,703.2 1194.7,700.4 1193.1,698.3 C1191.6,696.2 1190.2,693.5 1189.0,692.1 C1187.7,690.7 1188.1,690.5 1185.8,690.0 C1183.6,689.5 1177.3,688.3 1175.4,689.0 C1173.5,689.7 1175.1,693.0 1174.4,694.2 C1173.7,695.4 1172.5,696.4 1171.2,696.2 C1170.0,696.1 1167.4,695.2 1167.1,693.1 C1166.7,691.0 1169.2,686.7 1169.2,683.8 C1169.2,680.8 1166.7,677.8 1167.1,675.4 C1167.4,673.0 1169.7,671.1 1171.2,669.2 C1172.8,667.3 1175.1,665.2 1176.5,664.0 C1177.8,662.7 1179.1,662.2 1179.6,661.9" stroke="#94cc20"/>
<path d="M1183.8,681.7 C1184.3,680.6 1185.3,676.6 1186.9,675.4 C1188.4,674.2 1191.2,674.7 1193.1,674.4 C1195.0,674.0 1196.9,672.8 1198.3,673.3 C1199.7,673.9 1200.9,675.2 1201.5,677.5 C1202.0,679.8 1201.8,683.6 1201.5,686.9 C1201.1,690.2 1200.4,695.6 1199.4,697.3 C1198.3,699.0 1196.4,698.5 1195.2,697.3 C1194.0,696.1 1193.0,692.3 1192.1,690.0 C1191.2,687.7 1191.0,684.4 1190.0,683.8 C1189.0,683.1 1186.9,686.2 1185.8,685.8 C1184.8,685.5 1184.1,682.4 1183.8,681.7" stroke="#dccc1c"/>
<ellipse cx="1188.4" cy="681.7" rx="0.4" ry="0.4" stroke="#d44422"/>
<ellipse cx="1196.8" cy="692.1" rx="0.4" ry="0.4" stroke="#d44422"/>
<ellipse cx="1197.3" cy="667.3" rx="3.1" ry="1.9" stroke="#20b8b0"/>
<ellipse cx="1197.3" cy="667.3" rx="1.6" ry="1.0" stroke="#289ed0"/>
<ellipse cx="1204.6" cy="667.3" rx="5.7" ry="2.1" stroke="#94cc20"/>
<ellipse cx="1159.8" cy="677.0" rx="1.2" ry="1.2" stroke="#2c62be"/>
<ellipse cx="1159.8" cy="686.9" rx="1.6" ry="1.6" stroke="#20b8b0"/>
<ellipse cx="1209.8" cy="701.5" rx="1.0" ry="1.0" stroke="#3abe56"/>
<path d="M1219.2,674.4 C1219.3,672.1 1219.0,663.4 1220.2,660.8 C1221.4,658.2 1224.9,659.3 1226.5,658.8 C1228.0,658.2 1228.9,656.8 1229.6,657.7 C1230.3,658.6 1230.6,662.0 1230.6,664.0 C1230.6,665.9 1230.5,668.1 1229.6,669.2 C1228.7,670.2 1225.9,669.0 1225.4,670.2 C1224.9,671.4 1225.9,675.1 1226.5,676.5 C1227.0,677.8 1227.3,678.0 1228.5,678.5 C1229.8,679.1 1231.1,679.8 1233.8,679.6 C1236.4,679.4 1240.7,678.9 1244.2,677.5 C1247.6,676.1 1251.5,673.0 1254.6,671.2 C1257.7,669.5 1260.5,668.5 1262.9,667.1 C1265.3,665.7 1268.1,663.6 1269.2,662.9" stroke="#94cc20"/>
<path d="M1229.6,657.7 C1229.9,658.8 1231.5,662.4 1231.7,664.0 C1231.8,665.5 1231.1,667.1 1230.6,667.1 C1230.1,667.1 1228.7,665.5 1228.5,664.0 C1228.4,662.4 1229.4,658.8 1229.6,657.7" stroke="#dccc1c"/>
<path d="M1231.7,676.5 C1232.4,675.6 1234.8,673.5 1235.8,671.2 C1236.9,669.0 1237.2,665.5 1237.9,662.9 C1238.6,660.3 1239.0,657.4 1240.0,655.6 C1241.0,653.9 1243.0,653.9 1244.2,652.5 C1245.4,651.1 1245.9,648.7 1247.3,647.3 C1248.7,645.9 1251.3,645.4 1252.5,644.2 C1253.7,643.0 1254.2,640.7 1254.6,640.0" stroke="#94cc20"/>
<path d="M1244.2,665.0 C1244.0,664.0 1242.8,660.8 1243.1,658.8 C1243.5,656.7 1244.7,654.1 1246.2,652.5 C1247.8,650.9 1250.8,650.9 1252.5,649.4 C1254.2,647.8 1254.6,644.7 1256.7,643.1 C1258.8,641.6 1263.6,640.5 1265.0,640.0" stroke="#dccc1c"/>
<path d="M1250.4,655.6 C1250.2,654.4 1249.0,649.7 1249.4,648.3 C1249.7,646.9 1252.0,646.8 1252.5,647.3 C1253.0,647.8 1252.5,650.8 1252.5,651.5" stroke="#94cc20"/>
<path d="M1258.8,655.6 C1259.4,654.4 1261.5,650.6 1262.9,648.3 C1264.3,646.1 1266.2,643.5 1267.1,642.1 C1268.0,640.7 1268.0,640.3 1268.1,640.0" stroke="#94cc20"/>
<ellipse cx="1240.5" cy="673.1" rx="2.3" ry="2.3" stroke="#94cc20"/>
<ellipse cx="1235.3" cy="677.5" rx="1.2" ry="1.2" stroke="#94cc20"/>
<ellipse cx="1245.2" cy="658.8" rx="1.2" ry="1.2" stroke="#94cc20"/>
<path d="M1231.7,687.9 C1231.8,687.2 1231.3,684.8 1232.7,683.8 C1234.1,682.7 1237.0,682.7 1240.0,681.7 C1243.0,680.6 1247.1,679.1 1250.4,677.5 C1253.7,675.9 1256.0,674.9 1259.8,672.3 C1263.6,669.7 1271.1,663.6 1273.3,661.9" stroke="#20b8b0"/>
<path d="M1229.6,680.6 C1232.0,679.9 1239.1,678.4 1244.2,676.5 C1249.2,674.5 1255.3,671.6 1259.8,669.2 C1264.3,666.7 1269.3,663.1 1271.2,661.9" stroke="#3abe56"/>
<path d="M1258.8,681.7 C1258.6,681.1 1256.7,679.8 1257.7,678.5 C1258.8,677.3 1263.1,675.6 1265.0,674.4 C1266.9,673.2 1268.3,672.1 1269.2,671.2 C1270.0,670.4 1270.0,669.5 1270.2,669.2" stroke="#289ed0"/>
<path d="M1272.3,667.1 C1271.6,667.1 1269.0,666.6 1268.1,667.1 C1267.3,667.6 1266.6,669.5 1267.1,670.2 C1267.6,670.9 1270.6,671.1 1271.2,671.2" stroke="#289ed0"/>
<path d="M1231.7,683.8 C1231.5,684.4 1229.8,687.0 1230.6,687.9 C1231.5,688.8 1235.3,687.7 1236.9,689.0 C1238.4,690.2 1239.5,694.2 1240.0,695.2" stroke="#20b8b0"/>
<ellipse cx="1225.4" cy="692.6" rx="3.1" ry="2.1" stroke="#289ed0"/>
<ellipse cx="1268.6" cy="658.8" rx="1.2" ry="1.2" stroke="#3abe56"/>
<ellipse cx="1272.8" cy="648.9" rx="0.6" ry="0.6" stroke="#3abe56"/>
<path d="M1275.4,644.2 C1276.1,643.8 1278.2,642.4 1279.6,642.1 C1281.0,641.7 1282.7,641.4 1283.8,642.1 C1284.8,642.8 1285.1,646.6 1285.8,646.2 C1286.5,645.9 1287.6,641.0 1287.9,640.0" stroke="#3abe56"/>
<path d="M1290.0,640.0 C1290.3,640.9 1290.5,644.0 1292.1,645.2 C1293.6,646.4 1296.8,647.1 1299.4,647.3 C1302.0,647.5 1306.0,647.5 1307.7,646.2 C1309.4,645.0 1309.4,641.0 1309.8,640.0" stroke="#94cc20"/>
<path d="M1294.2,653.5 C1294.3,653.0 1293.8,651.3 1295.2,650.4 C1296.6,649.5 1300.2,649.0 1302.5,648.3 C1304.8,647.6 1307.0,647.6 1308.8,646.2 C1310.5,644.9 1312.2,641.0 1312.9,640.0" stroke="#3abe56"/>
<path d="M1316.0,640.0 C1315.9,640.7 1314.5,643.3 1315.0,644.2 C1315.5,645.0 1317.8,644.9 1319.2,645.2 C1320.6,645.6 1323.7,645.2 1323.3,646.2 C1323.0,647.3 1319.2,649.4 1317.1,651.5 C1315.0,653.5 1312.2,656.3 1310.8,658.8 C1309.4,661.2 1308.9,662.2 1308.8,666.0 C1308.6,669.9 1309.4,677.3 1309.8,681.7 C1310.1,686.0 1311.4,689.0 1310.8,692.1 C1310.3,695.2 1308.6,698.2 1306.7,700.4 C1304.8,702.7 1300.6,704.8 1299.4,705.6" stroke="#20b8b0"/>
<ellipse cx="1328.5" cy="674.4" rx="7.8" ry="9.9" stroke="#2c62be"/>
<path d="M1340.0,686.9 C1338.8,688.3 1335.0,693.0 1332.7,695.2 C1330.5,697.5 1327.5,697.5 1326.5,700.4 C1325.4,703.4 1326.1,708.6 1326.5,712.9 C1326.8,717.3 1327.3,723.3 1328.5,726.5 C1329.8,729.6 1331.8,730.5 1333.8,731.7 C1335.7,732.9 1339.0,733.4 1340.0,733.8" stroke="#20b8b0"/>
<path d="M1330.6,640.0 C1330.6,641.0 1329.9,644.0 1330.6,646.2 C1331.3,648.5 1333.2,651.3 1334.8,653.5 C1336.4,655.8 1339.1,658.8 1340.0,659.8" stroke="#3abe56"/>
<ellipse cx="1334.8" cy="645.7" rx="1.6" ry="1.6" stroke="#3abe56"/>
<path d="M1305.6,711.9 C1306.5,711.2 1308.9,708.2 1310.8,707.7 C1312.7,707.2 1315.3,707.2 1317.1,708.8 C1318.8,710.3 1320.7,714.3 1321.2,717.1 C1321.8,719.9 1320.6,723.2 1320.2,725.4 C1319.9,727.7 1319.3,729.8 1319.2,730.6" stroke="#2c62be"/>
<path d="M1211.9,739.0 C1212.4,738.1 1213.1,734.8 1215.0,733.8 C1216.9,732.7 1220.2,733.0 1223.3,732.7 C1226.5,732.4 1230.5,732.2 1233.8,732.2 C1237.0,732.2 1241.6,732.6 1243.1,732.7" stroke="#289ed0"/>
<path d="M1149.4,747.0 C1149.9,746.2 1150.6,743.1 1152.5,742.1 C1154.4,741.1 1157.4,741.0 1160.8,741.0 C1164.3,741.0 1170.6,741.1 1173.3,742.1 C1176.1,743.1 1176.8,746.2 1177.5,747.0" stroke="#289ed0"/>
</g>
<g clip-path="url(#cp2)">
<path d="M1405.0,540.0 C1405.7,541.0 1408.1,543.3 1409.2,546.2 C1410.2,549.2 1410.4,554.8 1411.2,557.7 C1412.1,560.7 1412.6,562.7 1414.4,564.0 C1416.1,565.2 1419.1,564.7 1421.7,565.0 C1424.3,565.3 1427.6,566.0 1430.0,566.0 C1432.4,566.1 1434.2,565.8 1436.2,565.5 C1438.3,565.3 1440.8,564.9 1442.5,564.5 C1444.2,564.0 1445.6,562.5 1446.7,562.9 C1447.7,563.4 1448.6,565.2 1448.8,567.1 C1448.9,569.0 1448.6,572.3 1447.7,574.4 C1446.8,576.5 1443.7,577.8 1443.5,579.6 C1443.4,581.3 1446.8,582.9 1446.7,584.8 C1446.5,586.7 1444.2,589.8 1442.5,591.0 C1440.8,592.3 1437.6,592.8 1436.2,592.1 C1434.9,591.4 1435.2,588.6 1434.2,586.9 C1433.1,585.1 1432.8,582.5 1430.0,581.7 C1427.2,580.8 1420.3,581.1 1417.5,581.7 C1414.7,582.2 1413.2,582.9 1413.3,584.8 C1413.5,586.7 1416.1,591.4 1418.5,593.1 C1421.0,594.9 1426.5,594.0 1427.9,595.2 C1429.3,596.4 1429.1,599.0 1426.9,600.4 C1424.6,601.8 1418.5,601.3 1414.4,603.5 C1410.2,605.8 1405.0,610.3 1401.9,614.0 C1398.8,617.6 1398.2,622.1 1395.6,625.4 C1393.0,628.7 1388.9,631.8 1386.2,633.8 C1383.6,635.7 1381.0,636.4 1380.0,636.9" stroke="#20b8b0"/>
<path d="M1414.4,546.2 C1413.9,547.3 1411.4,550.4 1411.2,552.5 C1411.1,554.6 1412.3,557.5 1413.3,558.8 C1414.4,560.0 1416.5,560.3 1417.5,559.8 C1418.5,559.3 1419.9,557.2 1419.6,555.6 C1419.2,554.1 1416.3,552.0 1415.4,550.4 C1414.5,548.9 1414.5,546.9 1414.4,546.2" stroke="#289ed0"/>
<ellipse cx="1423.8" cy="547.1" rx="2.1" ry="1.0" stroke="#2c62be"/>
<ellipse cx="1432.1" cy="542.6" rx="1.5" ry="1.2" stroke="#2c62be"/>
<path d="M1442.5,545.2 C1442.8,546.4 1443.2,550.6 1444.6,552.5 C1446.0,554.4 1449.6,554.9 1450.8,556.7 C1452.0,558.4 1451.2,561.2 1451.9,562.9 C1452.6,564.7 1453.8,565.3 1455.0,567.1 C1456.2,568.8 1457.8,571.6 1459.2,573.3 C1460.6,575.1 1461.9,576.1 1463.3,577.5 C1464.7,578.9 1465.8,580.1 1467.5,581.7 C1469.2,583.2 1472.7,586.0 1473.8,586.9" stroke="#20b8b0"/>
<path d="M1380.0,552.5 C1381.0,551.5 1383.6,547.6 1386.2,546.2 C1388.9,544.9 1392.7,544.2 1395.6,544.2 C1398.6,544.2 1401.9,544.9 1404.0,546.2 C1406.0,547.6 1407.6,550.1 1408.1,552.5 C1408.6,554.9 1406.0,558.4 1407.1,560.8 C1408.1,563.3 1411.6,566.2 1414.4,567.1 C1417.2,568.0 1420.5,566.6 1423.8,566.0 C1427.0,565.5 1431.0,564.1 1434.2,564.0 C1437.3,563.8 1440.4,564.5 1442.5,565.0 C1444.6,565.5 1446.3,566.4 1446.7,567.1 C1447.0,567.8 1446.3,568.6 1444.6,569.2 C1442.8,569.7 1439.0,569.9 1436.2,570.2 C1433.5,570.6 1430.7,570.7 1427.9,571.2 C1425.1,571.8 1422.4,572.3 1419.6,573.3 C1416.8,574.4 1414.0,576.5 1411.2,577.5 C1408.5,578.5 1405.5,579.2 1402.9,579.6 C1400.3,579.9 1397.7,579.2 1395.6,579.6 C1393.5,579.9 1392.3,581.0 1390.4,581.7 C1388.5,582.4 1385.9,583.1 1384.2,583.8 C1382.4,584.4 1380.7,585.5 1380.0,585.8" stroke="#94cc20"/>
<path d="M1380.0,560.8 C1381.0,559.4 1383.6,554.4 1386.2,552.5 C1388.9,550.6 1393.0,549.5 1395.6,549.4 C1398.2,549.2 1400.3,550.2 1401.9,551.5 C1403.4,552.7 1404.7,554.6 1405.0,556.7 C1405.3,558.8 1404.7,562.2 1404.0,564.0 C1403.3,565.7 1401.7,565.9 1400.8,567.1 C1400.0,568.3 1399.6,569.3 1398.8,571.2 C1397.9,573.2 1396.1,577.3 1395.6,578.5" stroke="#dccc1c"/>
<path d="M1380.0,598.3 C1380.7,597.3 1382.4,593.8 1384.2,592.1 C1385.9,590.3 1388.3,588.8 1390.4,587.9 C1392.5,587.0 1393.9,587.2 1396.7,586.9 C1399.4,586.5 1404.7,586.4 1407.1,585.8 C1409.5,585.3 1410.2,584.4 1411.2,583.8 C1412.3,583.1 1413.0,582.0 1413.3,581.7" stroke="#3abe56"/>
<path d="M1392.5,602.5 C1393.5,601.5 1396.3,598.5 1398.8,596.2 C1401.2,594.0 1404.3,590.2 1407.1,589.0 C1409.9,587.7 1413.5,588.1 1415.4,589.0 C1417.3,589.8 1418.4,592.6 1418.5,594.2 C1418.7,595.7 1418.0,596.9 1416.5,598.3 C1414.9,599.7 1411.1,601.1 1409.2,602.5 C1407.3,603.9 1406.4,605.3 1405.0,606.7 C1403.6,608.1 1402.4,609.8 1400.8,610.8 C1399.3,611.9 1397.2,612.9 1395.6,612.9 C1394.1,612.9 1392.3,611.9 1391.5,610.8 C1390.6,609.8 1390.2,608.1 1390.4,606.7 C1390.6,605.3 1392.2,603.2 1392.5,602.5" stroke="#3abe56"/>
<path d="M1380.0,626.5 C1381.4,625.9 1385.2,624.5 1388.3,623.3 C1391.5,622.1 1395.8,621.2 1398.8,619.2 C1401.7,617.1 1404.0,613.6 1406.0,610.8 C1408.1,608.1 1409.3,604.9 1411.2,602.5 C1413.2,600.1 1415.4,597.6 1417.5,596.2 C1419.6,594.9 1422.0,593.8 1423.8,594.2 C1425.5,594.5 1427.6,596.9 1427.9,598.3 C1428.3,599.7 1426.9,601.5 1425.8,602.5 C1424.8,603.5 1423.4,603.5 1421.7,604.6 C1419.9,605.6 1417.3,607.0 1415.4,608.8 C1413.5,610.5 1412.1,612.9 1410.2,615.0 C1408.3,617.1 1406.2,619.5 1404.0,621.2 C1401.7,623.0 1398.8,624.0 1396.7,625.4 C1394.6,626.8 1393.2,628.2 1391.5,629.6 C1389.7,631.0 1387.5,632.0 1386.2,633.8 C1385.0,635.5 1384.9,637.8 1384.2,640.0 C1383.5,642.2 1382.4,645.8 1382.1,647.0" stroke="#20b8b0"/>
<path d="M1401.9,617.1 C1402.6,616.4 1404.8,613.3 1406.0,612.9 C1407.3,612.6 1408.6,613.8 1409.2,615.0 C1409.7,616.2 1410.2,619.5 1409.2,620.2 C1408.1,620.9 1404.1,619.7 1402.9,619.2 C1401.7,618.6 1402.0,617.4 1401.9,617.1" stroke="#2c62be"/>
<ellipse cx="1429.0" cy="581.7" rx="3.6" ry="1.6" stroke="#289ed0"/>
<ellipse cx="1450.8" cy="576.5" rx="1.0" ry="1.0" stroke="#289ed0"/>
<ellipse cx="1434.2" cy="561.4" rx="4.2" ry="1.6" stroke="#20b8b0"/>
<ellipse cx="1442.5" cy="567.1" rx="4.2" ry="2.1" stroke="#94cc20"/>
<ellipse cx="1392.5" cy="570.2" rx="3.1" ry="3.1" stroke="#e49218"/>
<ellipse cx="1392.5" cy="570.2" rx="1.5" ry="1.5" stroke="#d44422"/>
<ellipse cx="1384.2" cy="570.2" rx="1.6" ry="1.6" stroke="#3abe56"/>
<ellipse cx="1387.8" cy="579.6" rx="1.6" ry="1.6" stroke="#3abe56"/>
<ellipse cx="1401.9" cy="573.3" rx="2.6" ry="5.2" stroke="#94cc20"/>
<ellipse cx="1422.7" cy="571.2" rx="2.6" ry="1.6" stroke="#94cc20"/>
<ellipse cx="1436.8" cy="553.0" rx="1.2" ry="1.2" stroke="#3abe56"/>
<ellipse cx="1383.1" cy="612.9" rx="2.6" ry="2.6" stroke="#20b8b0"/>
<ellipse cx="1387.8" cy="604.1" rx="1.6" ry="1.6" stroke="#20b8b0"/>
<path d="M1380.0,647.0 C1380.7,646.2 1382.1,643.8 1384.2,642.1 C1386.2,640.4 1389.7,638.6 1392.5,636.9 C1395.3,635.1 1397.7,633.2 1400.8,631.7 C1404.0,630.1 1407.4,629.2 1411.2,627.5 C1415.1,625.8 1419.6,623.3 1423.8,621.2 C1427.9,619.2 1432.8,617.4 1436.2,615.0 C1439.7,612.6 1441.8,609.4 1444.6,606.7 C1447.4,603.9 1450.1,600.4 1452.9,598.3 C1455.7,596.2 1458.3,594.5 1461.2,594.2 C1464.2,593.8 1469.1,595.9 1470.6,596.2" stroke="#3abe56"/>
<path d="M1406.0,647.0 C1406.9,645.1 1409.0,638.7 1411.2,635.8 C1413.5,632.9 1416.1,631.1 1419.6,629.6 C1423.1,628.0 1427.9,627.2 1432.1,626.5 C1436.2,625.8 1441.1,625.9 1444.6,625.4 C1448.1,624.9 1450.5,625.4 1452.9,623.3 C1455.3,621.2 1457.4,615.5 1459.2,612.9 C1460.9,610.3 1461.4,609.1 1463.3,607.7 C1465.2,606.3 1469.4,605.1 1470.6,604.6" stroke="#94cc20"/>
</g>
</g>
</svg>

<!-- status bar -->
<div class="sp" style="left:0px;width:99px">MapsID: 3841</div>
<div class="sp" style="left:102px;width:77px;padding-left:2px">png</div>
<div class="sp" style="left:182px;width:97px;padding-left:2px">MinZoom: 8</div>
<div class="sp" style="left:282px;width:97px;padding-left:2px">MaxZoom: 18</div>
<div class="sp" style="left:382px;width:97px;padding-left:1px">TileSize: 256</div>
<div class="sp" style="left:481px;width:99px;padding-left:2px">EPSG:3857</div>
<div class="sp" style="left:582px;width:1336px;padding-left:2px;font-size:12.9px">Longitude=8.338623, Latitude=46.604167, tile=8/133/90.png</div>
</body></html>
